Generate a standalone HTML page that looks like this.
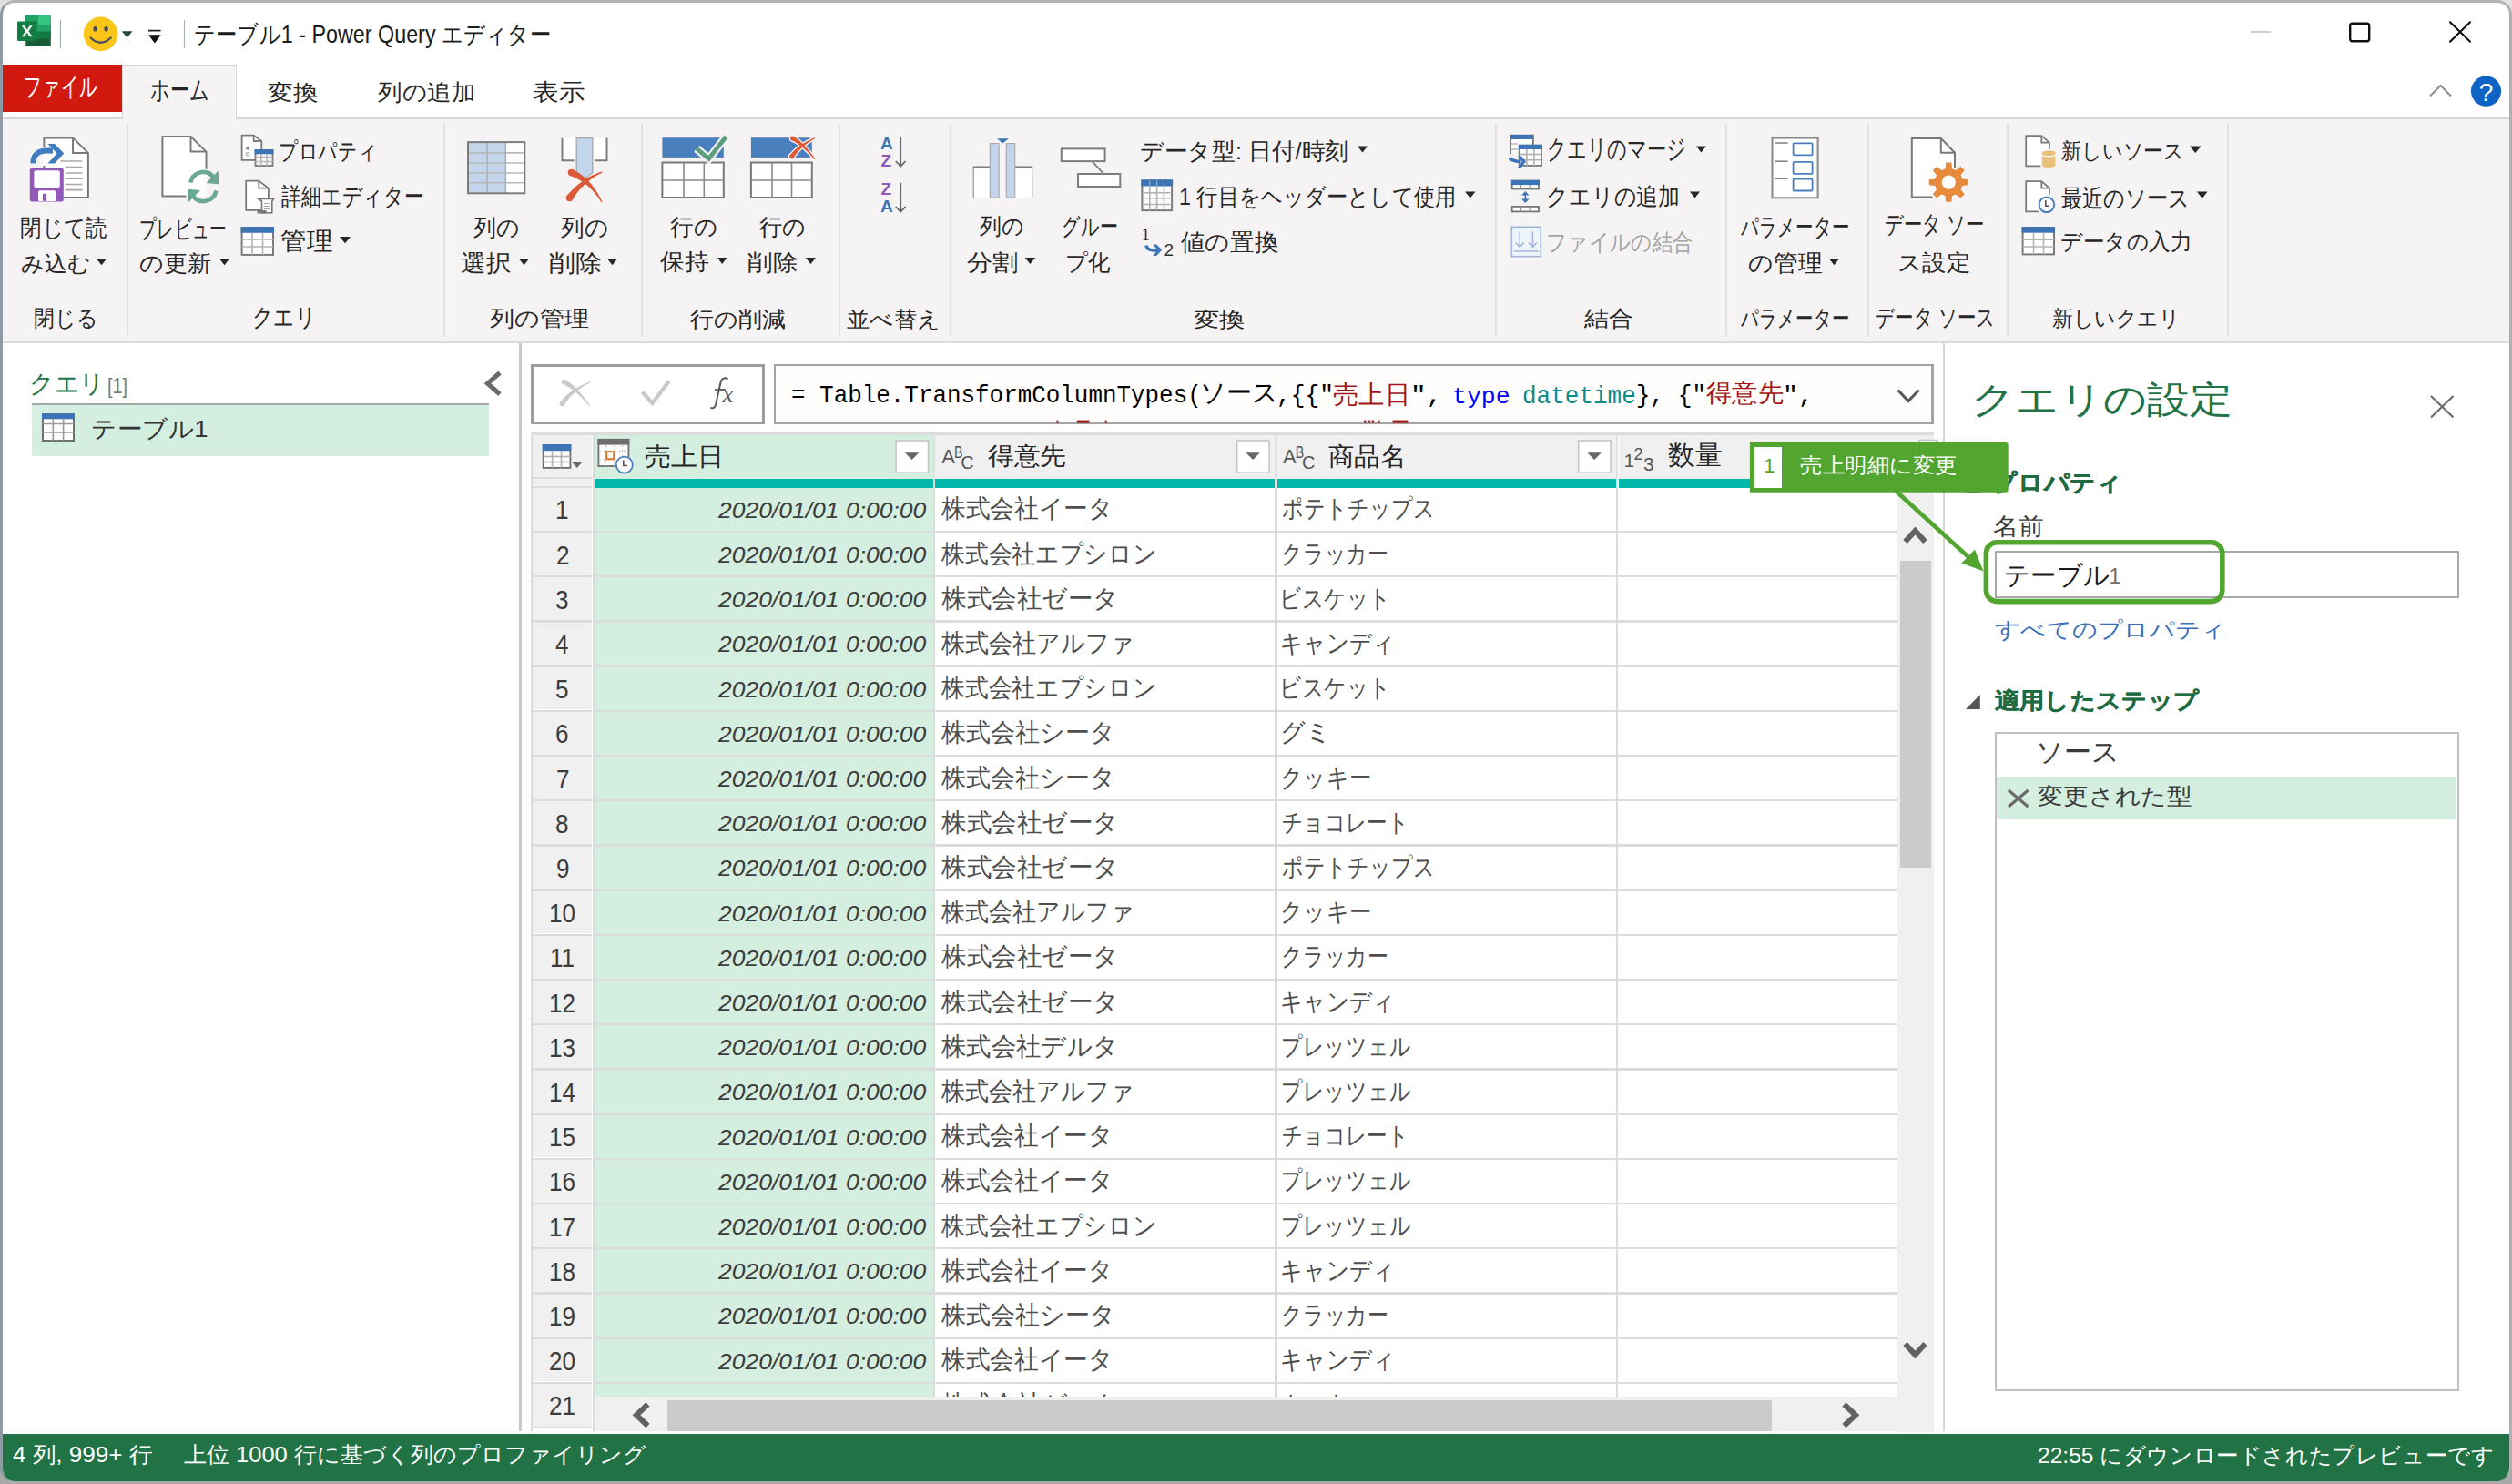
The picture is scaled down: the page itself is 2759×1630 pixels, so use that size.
<!DOCTYPE html>
<html lang="ja"><head><meta charset="utf-8"><title>Power Query</title>
<style>
html,body{margin:0;padding:0;}
body{width:2759px;height:1630px;overflow:hidden;background:linear-gradient(#e2e2e2,#a9a9a9 8%,#a9a9a9);position:relative;font-family:'Liberation Sans',sans-serif;}
#win{position:absolute;left:0;top:0;width:2759px;height:1627px;border-radius:16px;overflow:hidden;background:#ffffff;}
#frame{position:absolute;left:0;top:0;width:2759px;height:1627px;border-radius:16px;box-sizing:border-box;border-top:3px solid #b3b3b3;border-left:3px solid #8e9aa4;border-right:3.5px solid #b0b0b0;pointer-events:none;}
</style></head><body>
<div id="win">
<div style="position:absolute;left:0px;top:70.5px;width:134.00px;height:52.50px;background:#d1190f;"></div><div style="position:absolute;left:0px;top:129.3px;width:2759.00px;height:2.00px;background:#d8d8d8;"></div><div style="position:absolute;left:134px;top:71px;width:126.00px;height:60.30px;background:#f6f3f4;box-sizing:border-box;border:1.5px solid #d8d8d8;border-bottom:none;"></div><div style="position:absolute;left:0px;top:131.3px;width:2759.00px;height:243.70px;background:#f6f3f4;"></div><div style="position:absolute;left:0px;top:375px;width:2759.00px;height:2.30px;background:#dddbdb;"></div><div style="position:absolute;left:138.5px;top:136px;width:2.00px;height:234.00px;background:#e4e1e2;"></div><div style="position:absolute;left:487px;top:136px;width:2.00px;height:234.00px;background:#e4e1e2;"></div><div style="position:absolute;left:704px;top:136px;width:2.00px;height:234.00px;background:#e4e1e2;"></div><div style="position:absolute;left:921px;top:136px;width:2.00px;height:234.00px;background:#e4e1e2;"></div><div style="position:absolute;left:1043px;top:136px;width:2.00px;height:234.00px;background:#e4e1e2;"></div><div style="position:absolute;left:1642px;top:136px;width:2.00px;height:234.00px;background:#e4e1e2;"></div><div style="position:absolute;left:1895px;top:136px;width:2.00px;height:234.00px;background:#e4e1e2;"></div><div style="position:absolute;left:2051px;top:136px;width:2.00px;height:234.00px;background:#e4e1e2;"></div><div style="position:absolute;left:2204px;top:136px;width:2.00px;height:234.00px;background:#e4e1e2;"></div><div style="position:absolute;left:2446px;top:136px;width:2.00px;height:234.00px;background:#e4e1e2;"></div><div style="position:absolute;left:570px;top:377.3px;width:2.80px;height:1195.20px;background:#c9c9c9;"></div><div style="position:absolute;left:35px;top:442.5px;width:502.00px;height:2.70px;background:#a6a6a6;"></div><div style="position:absolute;left:35px;top:445.2px;width:502.00px;height:55.80px;background:#d4eee0;"></div><div style="position:absolute;left:583px;top:400.4px;width:256.50px;height:65.20px;box-sizing:border-box;border:3px solid #9d9d9d;background:#ffffff;"></div><div style="position:absolute;left:850px;top:400.4px;width:1274.20px;height:65.20px;box-sizing:border-box;border:2.6px solid #a3a3a3;background:#fffefd;border-right-width:3.4px;"></div><div style="position:absolute;left:583px;top:475.3px;width:1541.20px;height:2.70px;background:#dcdcdc;"></div><div style="position:absolute;left:583px;top:475.3px;width:2.40px;height:1097.20px;background:#dcdcdc;"></div><div style="position:absolute;left:585.4px;top:478px;width:65.10px;height:45.80px;background:#f0f0f0;"></div><div style="position:absolute;left:585.4px;top:523.8px;width:65.10px;height:2.40px;background:#dcdcdc;"></div><div style="position:absolute;left:585.4px;top:526.2px;width:65.10px;height:7.50px;background:#f0f0f0;"></div><div style="position:absolute;left:585.4px;top:533.7px;width:65.10px;height:2.30px;background:#dcdcdc;"></div><div style="position:absolute;left:650.5px;top:478px;width:2.40px;height:1094.50px;background:#dcdcdc;"></div><div style="position:absolute;left:652.9px;top:478px;width:372.00px;height:48.40px;background:#d4eee0;"></div><div style="position:absolute;left:1024.9px;top:478px;width:2.50px;height:58.00px;background:#e2e2e2;"></div><div style="position:absolute;left:1027.4px;top:478px;width:372.30px;height:48.40px;background:#f0f0f0;"></div><div style="position:absolute;left:1399.7px;top:478px;width:2.90px;height:58.00px;background:#e2e2e2;"></div><div style="position:absolute;left:1402.6px;top:478px;width:372.10px;height:48.40px;background:#f0f0f0;"></div><div style="position:absolute;left:1774.7px;top:478px;width:2.80px;height:58.00px;background:#e2e2e2;"></div><div style="position:absolute;left:1777.5px;top:478px;width:346.70px;height:48.40px;background:#f0f0f0;"></div><div style="position:absolute;left:652.9px;top:526.4px;width:372.00px;height:9.40px;background:#01b8aa;"></div><div style="position:absolute;left:1027.4px;top:526.4px;width:372.30px;height:9.40px;background:#01b8aa;"></div><div style="position:absolute;left:1402.6px;top:526.4px;width:372.10px;height:9.40px;background:#01b8aa;"></div><div style="position:absolute;left:1777.5px;top:526.4px;width:306.80px;height:9.40px;background:#01b8aa;"></div><div style="position:absolute;left:652.9px;top:536px;width:372.00px;height:998.20px;background:#d4eee0;"></div><div style="position:absolute;left:1027.4px;top:536px;width:1056.90px;height:998.20px;background:#ffffff;"></div><div style="position:absolute;left:1024.9px;top:536px;width:2.50px;height:998.20px;background:#dcdcdc;"></div><div style="position:absolute;left:1399.7px;top:536px;width:2.90px;height:998.20px;background:#dcdcdc;"></div><div style="position:absolute;left:1774.7px;top:536px;width:2.80px;height:998.20px;background:#dcdcdc;"></div><div style="position:absolute;left:585.4px;top:536.0px;width:65.10px;height:46.70px;background:#f0f0f0;"></div><div style="position:absolute;left:585.4px;top:582.7px;width:65.10px;height:2.50px;background:#dcdcdc;"></div><div style="position:absolute;left:652.9px;top:582.7px;width:1431.40px;height:2.50px;background:#dcdcdc;"></div><div style="position:absolute;left:585.4px;top:585.2px;width:65.10px;height:46.70px;background:#f0f0f0;"></div><div style="position:absolute;left:585.4px;top:631.9000000000001px;width:65.10px;height:2.50px;background:#dcdcdc;"></div><div style="position:absolute;left:652.9px;top:631.9000000000001px;width:1431.40px;height:2.50px;background:#dcdcdc;"></div><div style="position:absolute;left:585.4px;top:634.4px;width:65.10px;height:46.70px;background:#f0f0f0;"></div><div style="position:absolute;left:585.4px;top:681.1px;width:65.10px;height:2.50px;background:#dcdcdc;"></div><div style="position:absolute;left:652.9px;top:681.1px;width:1431.40px;height:2.50px;background:#dcdcdc;"></div><div style="position:absolute;left:585.4px;top:683.6px;width:65.10px;height:46.70px;background:#f0f0f0;"></div><div style="position:absolute;left:585.4px;top:730.3000000000001px;width:65.10px;height:2.50px;background:#dcdcdc;"></div><div style="position:absolute;left:652.9px;top:730.3000000000001px;width:1431.40px;height:2.50px;background:#dcdcdc;"></div><div style="position:absolute;left:585.4px;top:732.8px;width:65.10px;height:46.70px;background:#f0f0f0;"></div><div style="position:absolute;left:585.4px;top:779.5px;width:65.10px;height:2.50px;background:#dcdcdc;"></div><div style="position:absolute;left:652.9px;top:779.5px;width:1431.40px;height:2.50px;background:#dcdcdc;"></div><div style="position:absolute;left:585.4px;top:782.0px;width:65.10px;height:46.70px;background:#f0f0f0;"></div><div style="position:absolute;left:585.4px;top:828.7px;width:65.10px;height:2.50px;background:#dcdcdc;"></div><div style="position:absolute;left:652.9px;top:828.7px;width:1431.40px;height:2.50px;background:#dcdcdc;"></div><div style="position:absolute;left:585.4px;top:831.2px;width:65.10px;height:46.70px;background:#f0f0f0;"></div><div style="position:absolute;left:585.4px;top:877.9000000000001px;width:65.10px;height:2.50px;background:#dcdcdc;"></div><div style="position:absolute;left:652.9px;top:877.9000000000001px;width:1431.40px;height:2.50px;background:#dcdcdc;"></div><div style="position:absolute;left:585.4px;top:880.4000000000001px;width:65.10px;height:46.70px;background:#f0f0f0;"></div><div style="position:absolute;left:585.4px;top:927.1000000000001px;width:65.10px;height:2.50px;background:#dcdcdc;"></div><div style="position:absolute;left:652.9px;top:927.1000000000001px;width:1431.40px;height:2.50px;background:#dcdcdc;"></div><div style="position:absolute;left:585.4px;top:929.6px;width:65.10px;height:46.70px;background:#f0f0f0;"></div><div style="position:absolute;left:585.4px;top:976.3000000000001px;width:65.10px;height:2.50px;background:#dcdcdc;"></div><div style="position:absolute;left:652.9px;top:976.3000000000001px;width:1431.40px;height:2.50px;background:#dcdcdc;"></div><div style="position:absolute;left:585.4px;top:978.8px;width:65.10px;height:46.70px;background:#f0f0f0;"></div><div style="position:absolute;left:585.4px;top:1025.5px;width:65.10px;height:2.50px;background:#dcdcdc;"></div><div style="position:absolute;left:652.9px;top:1025.5px;width:1431.40px;height:2.50px;background:#dcdcdc;"></div><div style="position:absolute;left:585.4px;top:1028.0px;width:65.10px;height:46.70px;background:#f0f0f0;"></div><div style="position:absolute;left:585.4px;top:1074.7px;width:65.10px;height:2.50px;background:#dcdcdc;"></div><div style="position:absolute;left:652.9px;top:1074.7px;width:1431.40px;height:2.50px;background:#dcdcdc;"></div><div style="position:absolute;left:585.4px;top:1077.2px;width:65.10px;height:46.70px;background:#f0f0f0;"></div><div style="position:absolute;left:585.4px;top:1123.9px;width:65.10px;height:2.50px;background:#dcdcdc;"></div><div style="position:absolute;left:652.9px;top:1123.9px;width:1431.40px;height:2.50px;background:#dcdcdc;"></div><div style="position:absolute;left:585.4px;top:1126.4px;width:65.10px;height:46.70px;background:#f0f0f0;"></div><div style="position:absolute;left:585.4px;top:1173.1000000000001px;width:65.10px;height:2.50px;background:#dcdcdc;"></div><div style="position:absolute;left:652.9px;top:1173.1000000000001px;width:1431.40px;height:2.50px;background:#dcdcdc;"></div><div style="position:absolute;left:585.4px;top:1175.6px;width:65.10px;height:46.70px;background:#f0f0f0;"></div><div style="position:absolute;left:585.4px;top:1222.3px;width:65.10px;height:2.50px;background:#dcdcdc;"></div><div style="position:absolute;left:652.9px;top:1222.3px;width:1431.40px;height:2.50px;background:#dcdcdc;"></div><div style="position:absolute;left:585.4px;top:1224.8000000000002px;width:65.10px;height:46.70px;background:#f0f0f0;"></div><div style="position:absolute;left:585.4px;top:1271.5000000000002px;width:65.10px;height:2.50px;background:#dcdcdc;"></div><div style="position:absolute;left:652.9px;top:1271.5000000000002px;width:1431.40px;height:2.50px;background:#dcdcdc;"></div><div style="position:absolute;left:585.4px;top:1274.0px;width:65.10px;height:46.70px;background:#f0f0f0;"></div><div style="position:absolute;left:585.4px;top:1320.7px;width:65.10px;height:2.50px;background:#dcdcdc;"></div><div style="position:absolute;left:652.9px;top:1320.7px;width:1431.40px;height:2.50px;background:#dcdcdc;"></div><div style="position:absolute;left:585.4px;top:1323.2px;width:65.10px;height:46.70px;background:#f0f0f0;"></div><div style="position:absolute;left:585.4px;top:1369.9px;width:65.10px;height:2.50px;background:#dcdcdc;"></div><div style="position:absolute;left:652.9px;top:1369.9px;width:1431.40px;height:2.50px;background:#dcdcdc;"></div><div style="position:absolute;left:585.4px;top:1372.4px;width:65.10px;height:46.70px;background:#f0f0f0;"></div><div style="position:absolute;left:585.4px;top:1419.1000000000001px;width:65.10px;height:2.50px;background:#dcdcdc;"></div><div style="position:absolute;left:652.9px;top:1419.1000000000001px;width:1431.40px;height:2.50px;background:#dcdcdc;"></div><div style="position:absolute;left:585.4px;top:1421.6px;width:65.10px;height:46.70px;background:#f0f0f0;"></div><div style="position:absolute;left:585.4px;top:1468.3px;width:65.10px;height:2.50px;background:#dcdcdc;"></div><div style="position:absolute;left:652.9px;top:1468.3px;width:1431.40px;height:2.50px;background:#dcdcdc;"></div><div style="position:absolute;left:585.4px;top:1470.8000000000002px;width:65.10px;height:46.70px;background:#f0f0f0;"></div><div style="position:absolute;left:585.4px;top:1517.5000000000002px;width:65.10px;height:2.50px;background:#dcdcdc;"></div><div style="position:absolute;left:652.9px;top:1517.5000000000002px;width:1431.40px;height:2.50px;background:#dcdcdc;"></div><div style="position:absolute;left:585.4px;top:1520.0px;width:65.10px;height:46.70px;background:#f0f0f0;"></div><div style="position:absolute;left:585.4px;top:1566.7px;width:65.10px;height:2.50px;background:#dcdcdc;"></div><div style="position:absolute;left:2084.3px;top:541px;width:39.90px;height:1031.50px;background:#f0f0f0;"></div><div style="position:absolute;left:2087.3px;top:615.9px;width:33.70px;height:337.10px;background:#cbcbcb;"></div><div style="position:absolute;left:652.9px;top:1534.2px;width:1431.40px;height:38.30px;background:#f0f0f0;"></div><div style="position:absolute;left:732.6px;top:1538px;width:1213.40px;height:33.80px;background:#cbcbcb;"></div><div style="position:absolute;left:2134px;top:377.3px;width:2.00px;height:1195.20px;background:#d4d4d4;"></div><div style="position:absolute;left:2190.5px;top:604.8px;width:510.20px;height:52.20px;box-sizing:border-box;border:2.6px solid #a8a8a8;background:#ffffff;"></div><div style="position:absolute;left:2190.5px;top:804px;width:510.20px;height:723.50px;box-sizing:border-box;border:2.6px solid #c0c0c0;background:#ffffff;"></div><div style="position:absolute;left:2193.1px;top:853px;width:505.00px;height:46.70px;background:#d4eee0;"></div><div style="position:absolute;left:0px;top:1575px;width:2759.00px;height:55.00px;background:#217346;"></div>
<div style="position:absolute;left:0;top:0;width:2759px;height:1534.2px;overflow:hidden">
<div style="position:absolute;left:0;top:0;width:2084.3px;height:1534.2px;overflow:hidden"><div style="position:absolute;left:789.30px;top:548.75px;font-family:'Liberation Sans', sans-serif;font-size:24.028px;line-height:1;white-space:pre;font-style:italic;color:#3c3c3c;transform:scaleX(1.1029);transform-origin:0 0;">2020/01/01 0:00:00</div><div style="position:absolute;left:1034.40px;top:545.40px;font-family:'Liberation Sans', sans-serif;font-size:27.623px;line-height:1;white-space:pre;color:#4e4e4e;transform:scaleX(0.9536);transform-origin:0 0;">株式会社イータ</div><div style="position:absolute;left:1408.17px;top:545.40px;font-family:'Liberation Sans', sans-serif;font-size:27.623px;line-height:1;white-space:pre;color:#4e4e4e;transform:scaleX(0.8274);transform-origin:0 0;">ポテトチップス</div><div style="position:absolute;left:789.30px;top:597.95px;font-family:'Liberation Sans', sans-serif;font-size:24.028px;line-height:1;white-space:pre;font-style:italic;color:#3c3c3c;transform:scaleX(1.1029);transform-origin:0 0;">2020/01/01 0:00:00</div><div style="position:absolute;left:1034.40px;top:594.60px;font-family:'Liberation Sans', sans-serif;font-size:27.623px;line-height:1;white-space:pre;color:#4e4e4e;transform:scaleX(0.9197);transform-origin:0 0;">株式会社エプシロン</div><div style="position:absolute;left:1406.54px;top:594.60px;font-family:'Liberation Sans', sans-serif;font-size:27.623px;line-height:1;white-space:pre;color:#4e4e4e;transform:scaleX(0.8201);transform-origin:0 0;">クラッカー</div><div style="position:absolute;left:789.30px;top:647.15px;font-family:'Liberation Sans', sans-serif;font-size:24.028px;line-height:1;white-space:pre;font-style:italic;color:#3c3c3c;transform:scaleX(1.1029);transform-origin:0 0;">2020/01/01 0:00:00</div><div style="position:absolute;left:1034.40px;top:643.80px;font-family:'Liberation Sans', sans-serif;font-size:27.623px;line-height:1;white-space:pre;color:#4e4e4e;transform:scaleX(0.9823);transform-origin:0 0;">株式会社ゼータ</div><div style="position:absolute;left:1404.77px;top:643.80px;font-family:'Liberation Sans', sans-serif;font-size:27.623px;line-height:1;white-space:pre;color:#4e4e4e;transform:scaleX(0.8455);transform-origin:0 0;">ビスケット</div><div style="position:absolute;left:789.30px;top:696.35px;font-family:'Liberation Sans', sans-serif;font-size:24.028px;line-height:1;white-space:pre;font-style:italic;color:#3c3c3c;transform:scaleX(1.1029);transform-origin:0 0;">2020/01/01 0:00:00</div><div style="position:absolute;left:1034.40px;top:693.00px;font-family:'Liberation Sans', sans-serif;font-size:27.623px;line-height:1;white-space:pre;color:#4e4e4e;transform:scaleX(0.9304);transform-origin:0 0;">株式会社アルファ</div><div style="position:absolute;left:1406.38px;top:693.00px;font-family:'Liberation Sans', sans-serif;font-size:27.623px;line-height:1;white-space:pre;color:#4e4e4e;transform:scaleX(0.8728);transform-origin:0 0;">キャンディ</div><div style="position:absolute;left:789.30px;top:745.55px;font-family:'Liberation Sans', sans-serif;font-size:24.028px;line-height:1;white-space:pre;font-style:italic;color:#3c3c3c;transform:scaleX(1.1029);transform-origin:0 0;">2020/01/01 0:00:00</div><div style="position:absolute;left:1034.40px;top:742.20px;font-family:'Liberation Sans', sans-serif;font-size:27.623px;line-height:1;white-space:pre;color:#4e4e4e;transform:scaleX(0.9197);transform-origin:0 0;">株式会社エプシロン</div><div style="position:absolute;left:1404.77px;top:742.20px;font-family:'Liberation Sans', sans-serif;font-size:27.623px;line-height:1;white-space:pre;color:#4e4e4e;transform:scaleX(0.8455);transform-origin:0 0;">ビスケット</div><div style="position:absolute;left:789.30px;top:794.75px;font-family:'Liberation Sans', sans-serif;font-size:24.028px;line-height:1;white-space:pre;font-style:italic;color:#3c3c3c;transform:scaleX(1.1029);transform-origin:0 0;">2020/01/01 0:00:00</div><div style="position:absolute;left:1034.40px;top:791.40px;font-family:'Liberation Sans', sans-serif;font-size:27.623px;line-height:1;white-space:pre;color:#4e4e4e;transform:scaleX(0.9646);transform-origin:0 0;">株式会社シータ</div><div style="position:absolute;left:1406.09px;top:791.40px;font-family:'Liberation Sans', sans-serif;font-size:27.623px;line-height:1;white-space:pre;color:#4e4e4e;transform:scaleX(0.9696);transform-origin:0 0;">グミ</div><div style="position:absolute;left:789.30px;top:843.95px;font-family:'Liberation Sans', sans-serif;font-size:24.028px;line-height:1;white-space:pre;font-style:italic;color:#3c3c3c;transform:scaleX(1.1029);transform-origin:0 0;">2020/01/01 0:00:00</div><div style="position:absolute;left:1034.40px;top:840.60px;font-family:'Liberation Sans', sans-serif;font-size:27.623px;line-height:1;white-space:pre;color:#4e4e4e;transform:scaleX(0.9646);transform-origin:0 0;">株式会社シータ</div><div style="position:absolute;left:1406.39px;top:840.60px;font-family:'Liberation Sans', sans-serif;font-size:27.623px;line-height:1;white-space:pre;color:#4e4e4e;transform:scaleX(0.8709);transform-origin:0 0;">クッキー</div><div style="position:absolute;left:789.30px;top:893.15px;font-family:'Liberation Sans', sans-serif;font-size:24.028px;line-height:1;white-space:pre;font-style:italic;color:#3c3c3c;transform:scaleX(1.1029);transform-origin:0 0;">2020/01/01 0:00:00</div><div style="position:absolute;left:1034.40px;top:889.80px;font-family:'Liberation Sans', sans-serif;font-size:27.623px;line-height:1;white-space:pre;color:#4e4e4e;transform:scaleX(0.9823);transform-origin:0 0;">株式会社ゼータ</div><div style="position:absolute;left:1408.20px;top:889.80px;font-family:'Liberation Sans', sans-serif;font-size:27.623px;line-height:1;white-space:pre;color:#4e4e4e;transform:scaleX(0.8049);transform-origin:0 0;">チョコレート</div><div style="position:absolute;left:789.30px;top:942.35px;font-family:'Liberation Sans', sans-serif;font-size:24.028px;line-height:1;white-space:pre;font-style:italic;color:#3c3c3c;transform:scaleX(1.1029);transform-origin:0 0;">2020/01/01 0:00:00</div><div style="position:absolute;left:1034.40px;top:939.00px;font-family:'Liberation Sans', sans-serif;font-size:27.623px;line-height:1;white-space:pre;color:#4e4e4e;transform:scaleX(0.9823);transform-origin:0 0;">株式会社ゼータ</div><div style="position:absolute;left:1408.17px;top:939.00px;font-family:'Liberation Sans', sans-serif;font-size:27.623px;line-height:1;white-space:pre;color:#4e4e4e;transform:scaleX(0.8274);transform-origin:0 0;">ポテトチップス</div><div style="position:absolute;left:789.30px;top:991.55px;font-family:'Liberation Sans', sans-serif;font-size:24.028px;line-height:1;white-space:pre;font-style:italic;color:#3c3c3c;transform:scaleX(1.1029);transform-origin:0 0;">2020/01/01 0:00:00</div><div style="position:absolute;left:1034.40px;top:988.20px;font-family:'Liberation Sans', sans-serif;font-size:27.623px;line-height:1;white-space:pre;color:#4e4e4e;transform:scaleX(0.9304);transform-origin:0 0;">株式会社アルファ</div><div style="position:absolute;left:1406.39px;top:988.20px;font-family:'Liberation Sans', sans-serif;font-size:27.623px;line-height:1;white-space:pre;color:#4e4e4e;transform:scaleX(0.8709);transform-origin:0 0;">クッキー</div><div style="position:absolute;left:789.30px;top:1040.75px;font-family:'Liberation Sans', sans-serif;font-size:24.028px;line-height:1;white-space:pre;font-style:italic;color:#3c3c3c;transform:scaleX(1.1029);transform-origin:0 0;">2020/01/01 0:00:00</div><div style="position:absolute;left:1034.40px;top:1037.40px;font-family:'Liberation Sans', sans-serif;font-size:27.623px;line-height:1;white-space:pre;color:#4e4e4e;transform:scaleX(0.9823);transform-origin:0 0;">株式会社ゼータ</div><div style="position:absolute;left:1406.54px;top:1037.40px;font-family:'Liberation Sans', sans-serif;font-size:27.623px;line-height:1;white-space:pre;color:#4e4e4e;transform:scaleX(0.8201);transform-origin:0 0;">クラッカー</div><div style="position:absolute;left:789.30px;top:1089.95px;font-family:'Liberation Sans', sans-serif;font-size:24.028px;line-height:1;white-space:pre;font-style:italic;color:#3c3c3c;transform:scaleX(1.1029);transform-origin:0 0;">2020/01/01 0:00:00</div><div style="position:absolute;left:1034.40px;top:1086.60px;font-family:'Liberation Sans', sans-serif;font-size:27.623px;line-height:1;white-space:pre;color:#4e4e4e;transform:scaleX(0.9823);transform-origin:0 0;">株式会社ゼータ</div><div style="position:absolute;left:1406.38px;top:1086.60px;font-family:'Liberation Sans', sans-serif;font-size:27.623px;line-height:1;white-space:pre;color:#4e4e4e;transform:scaleX(0.8728);transform-origin:0 0;">キャンディ</div><div style="position:absolute;left:789.30px;top:1139.15px;font-family:'Liberation Sans', sans-serif;font-size:24.028px;line-height:1;white-space:pre;font-style:italic;color:#3c3c3c;transform:scaleX(1.1029);transform-origin:0 0;">2020/01/01 0:00:00</div><div style="position:absolute;left:1034.40px;top:1135.80px;font-family:'Liberation Sans', sans-serif;font-size:27.623px;line-height:1;white-space:pre;color:#4e4e4e;transform:scaleX(0.9772);transform-origin:0 0;">株式会社デルタ</div><div style="position:absolute;left:1407.36px;top:1135.80px;font-family:'Liberation Sans', sans-serif;font-size:27.623px;line-height:1;white-space:pre;color:#4e4e4e;transform:scaleX(0.8187);transform-origin:0 0;">プレッツェル</div><div style="position:absolute;left:789.30px;top:1188.35px;font-family:'Liberation Sans', sans-serif;font-size:24.028px;line-height:1;white-space:pre;font-style:italic;color:#3c3c3c;transform:scaleX(1.1029);transform-origin:0 0;">2020/01/01 0:00:00</div><div style="position:absolute;left:1034.40px;top:1185.00px;font-family:'Liberation Sans', sans-serif;font-size:27.623px;line-height:1;white-space:pre;color:#4e4e4e;transform:scaleX(0.9304);transform-origin:0 0;">株式会社アルファ</div><div style="position:absolute;left:1407.36px;top:1185.00px;font-family:'Liberation Sans', sans-serif;font-size:27.623px;line-height:1;white-space:pre;color:#4e4e4e;transform:scaleX(0.8187);transform-origin:0 0;">プレッツェル</div><div style="position:absolute;left:789.30px;top:1237.55px;font-family:'Liberation Sans', sans-serif;font-size:24.028px;line-height:1;white-space:pre;font-style:italic;color:#3c3c3c;transform:scaleX(1.1029);transform-origin:0 0;">2020/01/01 0:00:00</div><div style="position:absolute;left:1034.40px;top:1234.20px;font-family:'Liberation Sans', sans-serif;font-size:27.623px;line-height:1;white-space:pre;color:#4e4e4e;transform:scaleX(0.9536);transform-origin:0 0;">株式会社イータ</div><div style="position:absolute;left:1408.20px;top:1234.20px;font-family:'Liberation Sans', sans-serif;font-size:27.623px;line-height:1;white-space:pre;color:#4e4e4e;transform:scaleX(0.8049);transform-origin:0 0;">チョコレート</div><div style="position:absolute;left:789.30px;top:1286.75px;font-family:'Liberation Sans', sans-serif;font-size:24.028px;line-height:1;white-space:pre;font-style:italic;color:#3c3c3c;transform:scaleX(1.1029);transform-origin:0 0;">2020/01/01 0:00:00</div><div style="position:absolute;left:1034.40px;top:1283.40px;font-family:'Liberation Sans', sans-serif;font-size:27.623px;line-height:1;white-space:pre;color:#4e4e4e;transform:scaleX(0.9536);transform-origin:0 0;">株式会社イータ</div><div style="position:absolute;left:1407.36px;top:1283.40px;font-family:'Liberation Sans', sans-serif;font-size:27.623px;line-height:1;white-space:pre;color:#4e4e4e;transform:scaleX(0.8187);transform-origin:0 0;">プレッツェル</div><div style="position:absolute;left:789.30px;top:1335.95px;font-family:'Liberation Sans', sans-serif;font-size:24.028px;line-height:1;white-space:pre;font-style:italic;color:#3c3c3c;transform:scaleX(1.1029);transform-origin:0 0;">2020/01/01 0:00:00</div><div style="position:absolute;left:1034.40px;top:1332.60px;font-family:'Liberation Sans', sans-serif;font-size:27.623px;line-height:1;white-space:pre;color:#4e4e4e;transform:scaleX(0.9197);transform-origin:0 0;">株式会社エプシロン</div><div style="position:absolute;left:1407.36px;top:1332.60px;font-family:'Liberation Sans', sans-serif;font-size:27.623px;line-height:1;white-space:pre;color:#4e4e4e;transform:scaleX(0.8187);transform-origin:0 0;">プレッツェル</div><div style="position:absolute;left:789.30px;top:1385.15px;font-family:'Liberation Sans', sans-serif;font-size:24.028px;line-height:1;white-space:pre;font-style:italic;color:#3c3c3c;transform:scaleX(1.1029);transform-origin:0 0;">2020/01/01 0:00:00</div><div style="position:absolute;left:1034.40px;top:1381.80px;font-family:'Liberation Sans', sans-serif;font-size:27.623px;line-height:1;white-space:pre;color:#4e4e4e;transform:scaleX(0.9536);transform-origin:0 0;">株式会社イータ</div><div style="position:absolute;left:1406.38px;top:1381.80px;font-family:'Liberation Sans', sans-serif;font-size:27.623px;line-height:1;white-space:pre;color:#4e4e4e;transform:scaleX(0.8728);transform-origin:0 0;">キャンディ</div><div style="position:absolute;left:789.30px;top:1434.35px;font-family:'Liberation Sans', sans-serif;font-size:24.028px;line-height:1;white-space:pre;font-style:italic;color:#3c3c3c;transform:scaleX(1.1029);transform-origin:0 0;">2020/01/01 0:00:00</div><div style="position:absolute;left:1034.40px;top:1431.00px;font-family:'Liberation Sans', sans-serif;font-size:27.623px;line-height:1;white-space:pre;color:#4e4e4e;transform:scaleX(0.9646);transform-origin:0 0;">株式会社シータ</div><div style="position:absolute;left:1406.54px;top:1431.00px;font-family:'Liberation Sans', sans-serif;font-size:27.623px;line-height:1;white-space:pre;color:#4e4e4e;transform:scaleX(0.8201);transform-origin:0 0;">クラッカー</div><div style="position:absolute;left:789.30px;top:1483.55px;font-family:'Liberation Sans', sans-serif;font-size:24.028px;line-height:1;white-space:pre;font-style:italic;color:#3c3c3c;transform:scaleX(1.1029);transform-origin:0 0;">2020/01/01 0:00:00</div><div style="position:absolute;left:1034.40px;top:1480.20px;font-family:'Liberation Sans', sans-serif;font-size:27.623px;line-height:1;white-space:pre;color:#4e4e4e;transform:scaleX(0.9536);transform-origin:0 0;">株式会社イータ</div><div style="position:absolute;left:1406.38px;top:1480.20px;font-family:'Liberation Sans', sans-serif;font-size:27.623px;line-height:1;white-space:pre;color:#4e4e4e;transform:scaleX(0.8728);transform-origin:0 0;">キャンディ</div><div style="position:absolute;left:789.30px;top:1532.75px;font-family:'Liberation Sans', sans-serif;font-size:24.028px;line-height:1;white-space:pre;font-style:italic;color:#3c3c3c;transform:scaleX(1.1029);transform-origin:0 0;">2020/01/01 0:00:00</div><div style="position:absolute;left:1034.40px;top:1529.40px;font-family:'Liberation Sans', sans-serif;font-size:27.623px;line-height:1;white-space:pre;color:#4e4e4e;transform:scaleX(0.9823);transform-origin:0 0;">株式会社ゼータ</div><div style="position:absolute;left:1406.39px;top:1529.40px;font-family:'Liberation Sans', sans-serif;font-size:27.623px;line-height:1;white-space:pre;color:#4e4e4e;transform:scaleX(0.8709);transform-origin:0 0;">クッキー</div></div>
</div>
<div style="position:absolute;left:0;top:0;width:2759px;height:1572.5px;overflow:hidden"><div style="position:absolute;left:610.40px;top:545.40px;font-family:'Liberation Sans', sans-serif;font-size:30.063px;line-height:1;white-space:pre;color:#3b3b3b;transform:scaleX(0.8700);transform-origin:0 0;">1</div><div style="position:absolute;left:610.84px;top:594.60px;font-family:'Liberation Sans', sans-serif;font-size:30.063px;line-height:1;white-space:pre;color:#3b3b3b;transform:scaleX(0.8700);transform-origin:0 0;">2</div><div style="position:absolute;left:610.40px;top:643.80px;font-family:'Liberation Sans', sans-serif;font-size:30.063px;line-height:1;white-space:pre;color:#3b3b3b;transform:scaleX(0.8700);transform-origin:0 0;">3</div><div style="position:absolute;left:610.40px;top:693.00px;font-family:'Liberation Sans', sans-serif;font-size:30.063px;line-height:1;white-space:pre;color:#3b3b3b;transform:scaleX(0.8700);transform-origin:0 0;">4</div><div style="position:absolute;left:610.40px;top:742.20px;font-family:'Liberation Sans', sans-serif;font-size:30.063px;line-height:1;white-space:pre;color:#3b3b3b;transform:scaleX(0.8700);transform-origin:0 0;">5</div><div style="position:absolute;left:610.40px;top:791.40px;font-family:'Liberation Sans', sans-serif;font-size:30.063px;line-height:1;white-space:pre;color:#3b3b3b;transform:scaleX(0.8700);transform-origin:0 0;">6</div><div style="position:absolute;left:610.84px;top:840.60px;font-family:'Liberation Sans', sans-serif;font-size:30.063px;line-height:1;white-space:pre;color:#3b3b3b;transform:scaleX(0.8700);transform-origin:0 0;">7</div><div style="position:absolute;left:610.40px;top:889.80px;font-family:'Liberation Sans', sans-serif;font-size:30.063px;line-height:1;white-space:pre;color:#3b3b3b;transform:scaleX(0.8700);transform-origin:0 0;">8</div><div style="position:absolute;left:610.84px;top:939.00px;font-family:'Liberation Sans', sans-serif;font-size:30.063px;line-height:1;white-space:pre;color:#3b3b3b;transform:scaleX(0.8700);transform-origin:0 0;">9</div><div style="position:absolute;left:603.01px;top:988.20px;font-family:'Liberation Sans', sans-serif;font-size:30.063px;line-height:1;white-space:pre;color:#3b3b3b;transform:scaleX(0.8700);transform-origin:0 0;">10</div><div style="position:absolute;left:603.88px;top:1037.40px;font-family:'Liberation Sans', sans-serif;font-size:30.063px;line-height:1;white-space:pre;color:#3b3b3b;transform:scaleX(0.8700);transform-origin:0 0;">11</div><div style="position:absolute;left:603.01px;top:1086.60px;font-family:'Liberation Sans', sans-serif;font-size:30.063px;line-height:1;white-space:pre;color:#3b3b3b;transform:scaleX(0.8700);transform-origin:0 0;">12</div><div style="position:absolute;left:603.01px;top:1135.80px;font-family:'Liberation Sans', sans-serif;font-size:30.063px;line-height:1;white-space:pre;color:#3b3b3b;transform:scaleX(0.8700);transform-origin:0 0;">13</div><div style="position:absolute;left:602.57px;top:1185.00px;font-family:'Liberation Sans', sans-serif;font-size:30.063px;line-height:1;white-space:pre;color:#3b3b3b;transform:scaleX(0.8700);transform-origin:0 0;">14</div><div style="position:absolute;left:603.01px;top:1234.20px;font-family:'Liberation Sans', sans-serif;font-size:30.063px;line-height:1;white-space:pre;color:#3b3b3b;transform:scaleX(0.8700);transform-origin:0 0;">15</div><div style="position:absolute;left:603.01px;top:1283.40px;font-family:'Liberation Sans', sans-serif;font-size:30.063px;line-height:1;white-space:pre;color:#3b3b3b;transform:scaleX(0.8700);transform-origin:0 0;">16</div><div style="position:absolute;left:603.01px;top:1332.60px;font-family:'Liberation Sans', sans-serif;font-size:30.063px;line-height:1;white-space:pre;color:#3b3b3b;transform:scaleX(0.8700);transform-origin:0 0;">17</div><div style="position:absolute;left:603.01px;top:1381.80px;font-family:'Liberation Sans', sans-serif;font-size:30.063px;line-height:1;white-space:pre;color:#3b3b3b;transform:scaleX(0.8700);transform-origin:0 0;">18</div><div style="position:absolute;left:603.01px;top:1431.00px;font-family:'Liberation Sans', sans-serif;font-size:30.063px;line-height:1;white-space:pre;color:#3b3b3b;transform:scaleX(0.8700);transform-origin:0 0;">19</div><div style="position:absolute;left:603.44px;top:1480.20px;font-family:'Liberation Sans', sans-serif;font-size:30.063px;line-height:1;white-space:pre;color:#3b3b3b;transform:scaleX(0.8700);transform-origin:0 0;">20</div><div style="position:absolute;left:603.44px;top:1529.40px;font-family:'Liberation Sans', sans-serif;font-size:30.063px;line-height:1;white-space:pre;color:#3b3b3b;transform:scaleX(0.8700);transform-origin:0 0;">21</div></div>
<svg style="position:absolute;left:0;top:0" width="2759" height="1630" viewBox="0 0 2759 1630"><rect x="28.3" y="17.1" width="27.5" height="34" rx="1.5" fill="#185c37"/><rect x="28.3" y="17.1" width="27.5" height="25.4" fill="#107c41"/><rect x="28.3" y="17.1" width="27.5" height="17.4" fill="#21a366"/><rect x="42" y="17.1" width="13.8" height="10" fill="#33c481"/><rect x="19" y="23.4" width="21.5" height="21.5" rx="1.2" fill="#107c41"/><path d="M23.8 28.2L27 28.2L29.8 32.6L32.6 28.2L35.6 28.2L31.4 34.3L35.8 40.2L32.6 40.2L29.7 35.8L26.9 40.2L23.7 40.2L28.1 34.2Z" fill="#fff"/><line x1="66.5" y1="22" x2="66.5" y2="53" stroke="#9fb0ad" stroke-width="1.2"/><circle cx="110.6" cy="37.4" r="18.8" fill="#fcc51a"/><ellipse cx="104.6" cy="31.8" rx="2.3" ry="2.8" fill="#4b4f5c"/><ellipse cx="116.6" cy="31.8" rx="2.3" ry="2.8" fill="#4b4f5c"/><path d="M99.5 41.5Q110.6 52 121.7 41.5" fill="none" stroke="#4b4f5c" stroke-width="2.2" stroke-linecap="round"/><path d="M133.7 34.2L145.6 34.2L139.64999999999998 41.2Z" fill="#1d4a38"/><line x1="163" y1="33.6" x2="176.6" y2="33.6" stroke="#222" stroke-width="1.6"/><path d="M163 38.2L176.8 38.2L169.9 47.4Z" fill="#111"/><line x1="202.5" y1="22" x2="202.5" y2="53" stroke="#a7b5b3" stroke-width="1.2"/><line x1="2472" y1="35" x2="2494" y2="35" stroke="#c9c9c9" stroke-width="1.8"/><rect x="2581.2" y="25.7" width="21" height="19.6" rx="2.5" fill="none" stroke="#111" stroke-width="2.4"/><path d="M2691 24.3L2713 45.7M2713 24.3L2691 45.7" stroke="#111" stroke-width="2.2" stroke-linecap="round"/><path d="M2669 105.5L2680.5 94L2692 105.5" fill="none" stroke="#8c8c8c" stroke-width="2"/><circle cx="2730.5" cy="100.2" r="16.6" fill="#0f63c4"/><text x="2730.5" y="110.5" font-family="Liberation Sans" font-size="28" fill="#fff" text-anchor="middle">?</text><path d="M48.4 151.4H80L96.9 168V216.9H48.4Z" fill="#fff"/><path d="M48.4 151.4H80L96.9 168V216.9H48.4Z" fill="none" stroke="#7a7a7a" stroke-width="2" stroke-linejoin="round"/><path d="M80 151.4V168H96.9" fill="none" stroke="#7a7a7a" stroke-width="2" stroke-linejoin="round"/><rect x="46.5" y="163" width="4" height="19" fill="#fff"/><line x1="71.5" y1="183.5" x2="90.5" y2="183.5" stroke="#a8a8a8" stroke-width="1.6"/><line x1="71.5" y1="190" x2="90.5" y2="190" stroke="#a8a8a8" stroke-width="1.6"/><line x1="71.5" y1="196.2" x2="90.5" y2="196.2" stroke="#a8a8a8" stroke-width="1.6"/><line x1="71.5" y1="202.5" x2="90.5" y2="202.5" stroke="#a8a8a8" stroke-width="1.6"/><line x1="71.5" y1="208.6" x2="90.5" y2="208.6" stroke="#a8a8a8" stroke-width="1.6"/><line x1="66.5" y1="177" x2="90.5" y2="177" stroke="#a8a8a8" stroke-width="1.6"/><path d="M36.3 179.4C36.5 169 43 165.6 51 165.6H58" fill="none" stroke="#f8f8f8" stroke-width="8"/><path d="M36.3 179.4C36.5 169 43 165.6 51 165.6H58" fill="none" stroke="#3f7cc0" stroke-width="6"/><path d="M52.5 157.9H60L70.3 168.4L60 179.4H52.5L62.5 168.4Z" fill="#3f7cc0"/><rect x="32.8" y="184.4" width="37" height="37" rx="2.5" fill="#9158b8"/><rect x="37.4" y="187.2" width="28.4" height="18.8" rx="2" fill="#fff"/><rect x="42" y="209.3" width="19" height="11.6" rx="1.5" fill="#fff"/><rect x="47" y="212.8" width="4" height="8" fill="#9158b8"/><path d="M106 284.2L117 284.2L111.5 291.2Z" fill="#262626"/><path d="M178.4 150H209.5L226.5 166.6V215.5H178.4Z" fill="#fff"/><path d="M226.5 185.8V166.6L209.5 150H178.4V215.5H204.5" fill="none" stroke="#7a7a7a" stroke-width="2" stroke-linejoin="round"/><path d="M209.5 150V166.6H226.5" fill="none" stroke="#7a7a7a" stroke-width="2" stroke-linejoin="round"/><path d="M209.2 200.5A14.3 14.3 0 0 1 234.5 194.5" fill="none" stroke="#6aa892" stroke-width="4.6"/><path d="M239.8 187.5L240.2 202.2L226.5 201Z" fill="#6aa892"/><path d="M237.4 209.5A14.3 14.3 0 0 1 212.1 215.5" fill="none" stroke="#6aa892" stroke-width="4.6"/><path d="M206.8 222.5L206.4 207.8L220.1 209Z" fill="#6aa892"/><path d="M241 284.2L252 284.2L246.5 291.2Z" fill="#262626"/><path d="M265.6 148.6H278.7L287.3 155V175.9H265.6Z" fill="#fff"/><path d="M265.6 148.6H278.7L287.3 155V175.9H265.6Z" fill="none" stroke="#7a7a7a" stroke-width="1.8" stroke-linejoin="round"/><path d="M278.7 148.6V155H287.3" fill="none" stroke="#7a7a7a" stroke-width="1.8" stroke-linejoin="round"/><circle cx="272.2" cy="162.7" r="2" fill="#888"/><circle cx="272.2" cy="169.3" r="1.8" fill="none" stroke="#888" stroke-width="1"/><rect x="280.5" y="165" width="19.0" height="17" fill="#fff" stroke="#7a7a7a" stroke-width="1.8"/><rect x="279.6" y="164.1" width="20.8" height="5.2" fill="#3d74b6"/><line x1="286.8" y1="169.3" x2="286.8" y2="182" stroke="#b5b5b5" stroke-width="1.6"/><line x1="293.1" y1="169.3" x2="293.1" y2="182" stroke="#b5b5b5" stroke-width="1.6"/><line x1="280.5" y1="172.5" x2="299.5" y2="172.5" stroke="#b5b5b5" stroke-width="1.6"/><line x1="280.5" y1="177.5" x2="299.5" y2="177.5" stroke="#b5b5b5" stroke-width="1.6"/><path d="M270.2 198.6H284.3L294.9 206.7V230.9H270.2Z" fill="#fff"/><path d="M270.2 198.6H284.3L294.9 206.7V230.9H270.2Z" fill="none" stroke="#7a7a7a" stroke-width="1.8" stroke-linejoin="round"/><path d="M284.3 198.6V206.7H294.9" fill="none" stroke="#7a7a7a" stroke-width="1.8" stroke-linejoin="round"/><path d="M284 218.5H300.5L298.8 221V233.8H287.5V221Z" fill="#fff" stroke="#777" stroke-width="1.6"/><line x1="290" y1="223.5" x2="296" y2="223.5" stroke="#aaa" stroke-width="1"/><line x1="290" y1="226.5" x2="296" y2="226.5" stroke="#aaa" stroke-width="1"/><line x1="290" y1="229.5" x2="296" y2="229.5" stroke="#aaa" stroke-width="1"/><rect x="282.5" y="231" width="10" height="3.5" fill="#777"/><rect x="265.6" y="250.1" width="34.39999999999998" height="29.799999999999983" fill="#fff" stroke="#7a7a7a" stroke-width="2"/><rect x="264.6" y="249.1" width="36.39999999999998" height="6.7" fill="#3d74b6"/><line x1="277" y1="255.79999999999998" x2="277" y2="279.9" stroke="#b5b5b5" stroke-width="1.6"/><line x1="288.5" y1="255.79999999999998" x2="288.5" y2="279.9" stroke="#b5b5b5" stroke-width="1.6"/><line x1="265.6" y1="263" x2="300" y2="263" stroke="#b5b5b5" stroke-width="1.6"/><line x1="265.6" y1="271" x2="300" y2="271" stroke="#b5b5b5" stroke-width="1.6"/><path d="M373 260L385 260L379.0 267.3Z" fill="#262626"/><rect x="514" y="156.1" width="41.3" height="56.2" fill="#c2d5ea"/><rect x="555.3" y="156.1" width="21" height="56.2" fill="#fff"/><line x1="514" y1="167.9" x2="576.3" y2="167.9" stroke="#b8b8b8" stroke-width="1.6"/><line x1="514" y1="179" x2="576.3" y2="179" stroke="#b8b8b8" stroke-width="1.6"/><line x1="514" y1="190" x2="576.3" y2="190" stroke="#b8b8b8" stroke-width="1.6"/><line x1="514" y1="200.8" x2="576.3" y2="200.8" stroke="#b8b8b8" stroke-width="1.6"/><line x1="535.1" y1="156.1" x2="535.1" y2="212.3" stroke="#b0b0b0" stroke-width="1.6"/><line x1="555.3" y1="156.1" x2="555.3" y2="212.3" stroke="#b0b0b0" stroke-width="1.6"/><rect x="514" y="156.1" width="62.3" height="56.2" fill="none" stroke="#7d7d7d" stroke-width="2"/><path d="M570 284.2L581 284.2L575.5 291.2Z" fill="#262626"/><rect x="617.8" y="151.5" width="48" height="24.7" fill="#fff"/><path d="M617.5 151.5V176.2H630.7M653.3 176.2H666.5V151.5" fill="none" stroke="#7d7d7d" stroke-width="2"/><path d="M633.2 151.5H650.8V190L642 196L633.2 190Z" fill="#c2d5ea" stroke="#a9a9a9" stroke-width="1.4"/><path d="M626.06 192.96L628.51 193.84L630.93 194.83L633.30 195.94L635.64 197.19L637.94 198.55L640.20 200.05L642.43 201.68L644.61 203.44L646.75 205.33L648.85 207.35L650.91 209.50L652.92 211.79L654.88 214.22L656.79 216.77L658.66 219.46L660.47 222.29L661.53 221.71L660.03 218.66L658.47 215.71L656.84 212.87L655.15 210.14L653.38 207.52L651.54 205.01L649.63 202.61L647.64 200.31L645.58 198.13L643.44 196.06L641.22 194.10L638.92 192.25L636.54 190.52L634.09 188.91L631.55 187.41L628.94 186.04Z" fill="#dc5a38"/><circle cx="627.5" cy="189.5" r="3.75" fill="#dc5a38"/><path d="M628.56 219.67L630.17 217.13L631.84 214.69L633.57 212.33L635.35 210.05L637.20 207.87L639.10 205.77L641.07 203.76L643.10 201.83L645.19 199.99L647.35 198.24L649.58 196.57L651.87 194.99L654.23 193.50L656.65 192.10L659.15 190.78L661.71 189.56L661.29 188.44L658.53 189.31L655.82 190.29L653.14 191.38L650.51 192.57L647.91 193.87L645.37 195.28L642.86 196.80L640.40 198.42L637.99 200.15L635.62 202.00L633.30 203.95L631.02 206.01L628.80 208.18L626.63 210.45L624.51 212.84L622.44 215.33Z" fill="#dc5a38"/><circle cx="625.5" cy="217.5" r="3.75" fill="#dc5a38"/><path d="M667 284.2L678 284.2L672.5 291.2Z" fill="#262626"/><rect x="727.4" y="151.2" width="67.4" height="21.7" fill="#4a7fbe"/><rect x="727.4" y="178.5" width="67.39999999999998" height="38.5" fill="#fff" stroke="#7a7a7a" stroke-width="2"/><line x1="751" y1="178.5" x2="751" y2="217" stroke="#8a8a8a" stroke-width="1.6"/><line x1="773.3" y1="178.5" x2="773.3" y2="217" stroke="#8a8a8a" stroke-width="1.6"/><line x1="727.4" y1="198" x2="794.8" y2="198" stroke="#8a8a8a" stroke-width="1.6"/><path d="M765 163.2L778.5 174.3L797.5 150" fill="none" stroke="#f6f3f4" stroke-width="9"/><path d="M765 163.2L778.5 174.3L797.5 150" fill="none" stroke="#5e9e80" stroke-width="4.8"/><path d="M788 283L798.4 283L793.2 290Z" fill="#262626"/><rect x="824.9" y="151.2" width="66.9" height="21.7" fill="#4a7fbe"/><rect x="824.9" y="178.5" width="66.89999999999998" height="38.5" fill="#fff" stroke="#7a7a7a" stroke-width="2"/><line x1="848" y1="178.5" x2="848" y2="217" stroke="#8a8a8a" stroke-width="1.6"/><line x1="869.5" y1="178.5" x2="869.5" y2="217" stroke="#8a8a8a" stroke-width="1.6"/><line x1="824.9" y1="198" x2="891.8" y2="198" stroke="#8a8a8a" stroke-width="1.6"/><path d="M872.56 174.17L873.49 172.73L874.48 171.31L875.54 169.90L876.68 168.51L877.88 167.13L879.16 165.78L880.51 164.44L881.93 163.12L883.42 161.81L884.98 160.53L886.62 159.27L888.33 158.03L890.11 156.81L891.97 155.61L893.90 154.44L895.89 153.29L894.11 149.71L891.92 150.71L889.80 151.74L887.73 152.81L885.73 153.91L883.79 155.04L881.91 156.20L880.09 157.40L878.32 158.63L876.62 159.90L874.98 161.21L873.40 162.55L871.89 163.93L870.43 165.35L869.04 166.80L867.71 168.30L866.44 169.83Z" fill="#f6f3f4"/><circle cx="869.5" cy="172" r="3.75" fill="#f6f3f4"/><path d="M868.77 155.32L870.12 155.95L871.51 156.66L872.93 157.46L874.38 158.35L875.85 159.34L877.35 160.42L878.87 161.59L880.41 162.85L881.97 164.20L883.55 165.64L885.15 167.18L886.77 168.80L888.41 170.52L890.06 172.33L891.73 174.23L893.41 176.21L896.59 173.79L895.04 171.61L893.49 169.52L891.95 167.50L890.42 165.57L888.89 163.72L887.37 161.95L885.86 160.26L884.34 158.65L882.83 157.13L881.32 155.68L879.82 154.31L878.31 153.02L876.80 151.81L875.28 150.69L873.76 149.64L872.23 148.68Z" fill="#f6f3f4"/><circle cx="870.5" cy="152" r="3.75" fill="#f6f3f4"/><path d="M871.54 173.45L872.48 171.96L873.49 170.49L874.57 169.04L875.73 167.60L876.95 166.18L878.25 164.78L879.62 163.40L881.06 162.04L882.58 160.70L884.17 159.39L885.83 158.09L887.56 156.81L889.37 155.56L891.25 154.33L893.20 153.13L895.22 151.95L894.78 151.05L892.62 152.02L890.52 153.03L888.48 154.06L886.50 155.12L884.58 156.22L882.72 157.35L880.92 158.51L879.19 159.71L877.51 160.94L875.89 162.20L874.33 163.50L872.83 164.84L871.40 166.21L870.02 167.62L868.71 169.07L867.46 170.55Z" fill="#dc5a38"/><circle cx="869.5" cy="172" r="2.5" fill="#dc5a38"/><path d="M869.34 154.22L870.76 154.85L872.20 155.57L873.67 156.39L875.16 157.30L876.67 158.30L878.21 159.39L879.77 160.57L881.35 161.84L882.95 163.21L884.56 164.67L886.20 166.21L887.85 167.85L889.51 169.58L891.19 171.40L892.89 173.31L894.60 175.30L895.40 174.70L893.87 172.53L892.35 170.45L890.84 168.44L889.34 166.52L887.85 164.69L886.36 162.93L884.88 161.25L883.40 159.66L881.93 158.14L880.46 156.71L878.99 155.35L877.53 154.08L876.07 152.88L874.60 151.77L873.13 150.74L871.66 149.78Z" fill="#dc5a38"/><circle cx="870.5" cy="152" r="2.5" fill="#dc5a38"/><path d="M884.8 283L896 283L890.4 290Z" fill="#262626"/><text x="967" y="164" font-family="Liberation Sans" font-weight="bold" font-size="19" fill="#3d74b6">A</text><text x="967.5" y="183" font-family="Liberation Sans" font-weight="bold" font-size="19" fill="#8a5cb8">Z</text><path d="M989.2 150.6V182.4M983.8 177L989.2 182.6L994.6 177" fill="none" stroke="#666" stroke-width="1.8"/><text x="967.5" y="214" font-family="Liberation Sans" font-weight="bold" font-size="19" fill="#8a5cb8">Z</text><text x="967" y="233" font-family="Liberation Sans" font-weight="bold" font-size="19" fill="#3d74b6">A</text><path d="M989.2 200.8V232.5M983.8 227L989.2 232.7L994.6 227" fill="none" stroke="#666" stroke-width="1.8"/><path d="M1069.7 217V183.5H1087.4M1114.7 183.5H1133.2V217" fill="#fff" stroke="#7d7d7d" stroke-width="2"/><rect x="1069.7" y="184.5" width="17.7" height="32.5" fill="#fff"/><rect x="1114.7" y="184.5" width="18.5" height="32.5" fill="#fff"/><rect x="1087.4" y="157.6" width="9.7" height="59.4" fill="#c2d5ea" stroke="#a9a9a9" stroke-width="1.2"/><rect x="1105.3" y="157.6" width="9.4" height="59.4" fill="#c2d5ea" stroke="#a9a9a9" stroke-width="1.2"/><path d="M1095 152.2H1107.7L1101.3 157.5Z" fill="#3d74b6"/><path d="M1125.8 283L1137 283L1131.4 290Z" fill="#262626"/><rect x="1165.8" y="163.4" width="47.8" height="13.7" fill="#fff" stroke="#7d7d7d" stroke-width="2"/><rect x="1184" y="191" width="46.3" height="14" fill="#fff" stroke="#7d7d7d" stroke-width="2"/><line x1="1199.6" y1="177.1" x2="1212.2" y2="191" stroke="#7d7d7d" stroke-width="1.8"/><path d="M1491 160.5L1502 160.5L1496.5 167.5Z" fill="#262626"/><rect x="1254.4" y="198.4" width="32.69999999999982" height="32.69999999999999" fill="#fff" stroke="#7a7a7a" stroke-width="2"/><rect x="1253.4" y="197.4" width="34.69999999999982" height="7.1" fill="#3d74b6"/><line x1="1262.8" y1="204.5" x2="1262.8" y2="231.1" stroke="#b0b0b0" stroke-width="1.6"/><line x1="1270.6" y1="204.5" x2="1270.6" y2="231.1" stroke="#b0b0b0" stroke-width="1.6"/><line x1="1278.4" y1="204.5" x2="1278.4" y2="231.1" stroke="#b0b0b0" stroke-width="1.6"/><line x1="1254.4" y1="211.7" x2="1287.1" y2="211.7" stroke="#b0b0b0" stroke-width="1.6"/><line x1="1254.4" y1="217.8" x2="1287.1" y2="217.8" stroke="#b0b0b0" stroke-width="1.6"/><line x1="1254.4" y1="224.5" x2="1287.1" y2="224.5" stroke="#b0b0b0" stroke-width="1.6"/><line x1="1262.8" y1="198.4" x2="1262.8" y2="204.5" stroke="#8fb0d8" stroke-width="1.2"/><line x1="1270.6" y1="198.4" x2="1270.6" y2="204.5" stroke="#8fb0d8" stroke-width="1.2"/><line x1="1278.4" y1="198.4" x2="1278.4" y2="204.5" stroke="#8fb0d8" stroke-width="1.2"/><path d="M1609 210.5L1620.5 210.5L1614.75 217.5Z" fill="#262626"/><text x="1253.5" y="264.2" font-family="Liberation Serif" font-size="19" fill="#333">1</text><path d="M1258.8 269.6C1260 275 1265 275.6 1271 274.8" fill="none" stroke="#3d74b6" stroke-width="3.4"/><path d="M1266.4 268.6L1270.2 268.6L1276.3 274.6L1270.2 281L1266.4 281L1271.3 274.7Z" fill="#3d74b6"/><text x="1278.6" y="281.4" font-family="Liberation Sans" font-size="19" fill="#333">2</text><path d="M1659.1 169.3V148.6H1683.9V159" fill="#fff" stroke="#777" stroke-width="1.8"/><rect x="1659.1" y="148" width="24.8" height="5" fill="#3d74b6"/><line x1="1660" y1="158" x2="1667" y2="158" stroke="#aaa" stroke-width="1.2"/><line x1="1660" y1="164" x2="1667" y2="164" stroke="#aaa" stroke-width="1.2"/><rect x="1668.7" y="159.7" width="24.299999999999955" height="22.200000000000017" fill="#fff" stroke="#7a7a7a" stroke-width="1.8"/><rect x="1667.8" y="158.79999999999998" width="26.099999999999955" height="5.2" fill="#3d74b6"/><line x1="1676.8" y1="164.0" x2="1676.8" y2="181.9" stroke="#b0b0b0" stroke-width="1.6"/><line x1="1684.9" y1="164.0" x2="1684.9" y2="181.9" stroke="#b0b0b0" stroke-width="1.6"/><line x1="1668.7" y1="169.5" x2="1693" y2="169.5" stroke="#b0b0b0" stroke-width="1.6"/><line x1="1668.7" y1="175.7" x2="1693" y2="175.7" stroke="#b0b0b0" stroke-width="1.6"/><path d="M1658 173.3C1661 177 1666 177.4 1670.5 177.4" fill="none" stroke="#3d74b6" stroke-width="3.6"/><path d="M1667 171.3H1670.8L1676 177.5L1670.8 184H1667L1671.6 177.5Z" fill="#3d74b6"/><path d="M1863 160.5L1874 160.5L1868.5 167.5Z" fill="#262626"/><rect x="1660.7" y="198.6" width="29.3" height="8.9" fill="#fff" stroke="#777" stroke-width="1.8"/><rect x="1659.8" y="197.8" width="31.1" height="5.3" fill="#3d74b6"/><line x1="1670.5" y1="203" x2="1670.5" y2="207.5" stroke="#999" stroke-width="1.2"/><line x1="1680.2" y1="203" x2="1680.2" y2="207.5" stroke="#999" stroke-width="1.2"/><rect x="1660.7" y="226.9" width="29.3" height="5.5" fill="#fff" stroke="#777" stroke-width="1.8"/><line x1="1670.5" y1="226.9" x2="1670.5" y2="232.4" stroke="#999" stroke-width="1.2"/><line x1="1680.2" y1="226.9" x2="1680.2" y2="232.4" stroke="#999" stroke-width="1.2"/><path d="M1675.3 210L1679.5 214.6H1671.1Z M1675.3 223L1679.5 218.4H1671.1Z" fill="#3d74b6"/><line x1="1675.3" y1="213" x2="1675.3" y2="220" stroke="#3d74b6" stroke-width="1.6"/><path d="M1856 210.5L1867 210.5L1861.5 217.5Z" fill="#262626"/><rect x="1660.3" y="249.3" width="32" height="32.4" fill="#eef4fb" stroke="#9fb8d8" stroke-width="1.6"/><path d="M1669.2 254.6V271M1664.8 266.5L1669.2 271.3L1673.6 266.5M1683.4 254.6V271M1679 266.5L1683.4 271.3L1687.8 266.5" fill="none" stroke="#9fb8d8" stroke-width="1.5"/><line x1="1662.7" y1="275.9" x2="1690" y2="275.9" stroke="#9fb8d8" stroke-width="1.5"/><rect x="1946.5" y="151.5" width="50.1" height="65.8" fill="#fff" stroke="#888" stroke-width="2"/><line x1="1949.8" y1="157" x2="1963.7" y2="157" stroke="#888" stroke-width="1.6"/><line x1="1949.8" y1="177.2" x2="1963.7" y2="177.2" stroke="#888" stroke-width="1.6"/><line x1="1949.8" y1="196.2" x2="1963.7" y2="196.2" stroke="#888" stroke-width="1.6"/><rect x="1969.6" y="157.39999999999998" width="21" height="12.900000000000011" rx="1" fill="#fff" stroke="#4a7fc0" stroke-width="1.8"/><rect x="1969.6" y="177.89999999999998" width="21" height="13.000000000000005" rx="1" fill="#fff" stroke="#4a7fc0" stroke-width="1.8"/><rect x="1969.6" y="196.6" width="21" height="12.899999999999983" rx="1" fill="#fff" stroke="#4a7fc0" stroke-width="1.8"/><path d="M2009 284.2L2020 284.2L2014.5 291.2Z" fill="#262626"/><path d="M2099.8 152H2131.8L2147 167.7V216.4H2099.8Z" fill="#fff"/><path d="M2147 184.4V167.7L2131.8 152H2099.8V216.4H2122.7" fill="none" stroke="#7a7a7a" stroke-width="2" stroke-linejoin="round"/><path d="M2131.8 152V167.7H2147" fill="none" stroke="#7a7a7a" stroke-width="2" stroke-linejoin="round"/><path d="M2136.49 185.18L2137.25 178.61L2143.35 178.61L2144.11 185.18L2148.23 186.88L2153.41 182.78L2157.72 187.09L2153.62 192.27L2155.32 196.39L2161.89 197.15L2161.89 203.25L2155.32 204.01L2153.62 208.13L2157.72 213.31L2153.41 217.62L2148.23 213.52L2144.11 215.22L2143.35 221.79L2137.25 221.79L2136.49 215.22L2132.37 213.52L2127.19 217.62L2122.88 213.31L2126.98 208.13L2125.28 204.01L2118.71 203.25L2118.71 197.15L2125.28 196.39L2126.98 192.27L2122.88 187.09L2127.19 182.78L2132.37 186.88ZM2147.9 200.2A7.6 7.6 0 1 0 2132.7000000000003 200.2A7.6 7.6 0 1 0 2147.9 200.2Z" fill="#e88a3c" fill-rule="evenodd"/><path d="M2225.2 149.1H2242.3L2250.9 156.7V182.4H2225.2Z" fill="#fff"/><path d="M2250.9 163.7V156.7L2242.3 149.1H2225.2V182.4H2241.3" fill="none" stroke="#7a7a7a" stroke-width="1.8" stroke-linejoin="round"/><path d="M2242.3 149.1V156.7H2250.9" fill="none" stroke="#7a7a7a" stroke-width="1.8" stroke-linejoin="round"/><path d="M2242.8 168.5V181.5A7.35 2.5 0 0 0 2257.5 181.5V168.5Z" fill="#e8c07a"/><ellipse cx="2250.15" cy="167.8" rx="7.35" ry="2.4" fill="#e8c07a"/><path d="M2242.8 169.5A7.35 2.4 0 0 0 2257.5 169.5" fill="none" stroke="#fff" stroke-width="1.2"/><path d="M2405 160.5L2417.5 160.5L2411.25 168Z" fill="#262626"/><path d="M2225.2 199.1H2242.3L2250.9 206.7V232.4H2225.2Z" fill="#fff"/><path d="M2250.9 213.2V206.7L2242.3 199.1H2225.2V232.4H2238.8" fill="none" stroke="#7a7a7a" stroke-width="1.8" stroke-linejoin="round"/><path d="M2242.3 199.1V206.7H2250.9" fill="none" stroke="#7a7a7a" stroke-width="1.8" stroke-linejoin="round"/><circle cx="2247.9" cy="224.8" r="8.3" fill="#fff" stroke="#4a7fc0" stroke-width="2"/><path d="M2246.8 220V226.3H2251" fill="none" stroke="#555" stroke-width="1.6"/><path d="M2413 210.5L2424.5 210.5L2418.75 218Z" fill="#262626"/><rect x="2221.6" y="250.1" width="34.40000000000009" height="29.299999999999983" fill="#fff" stroke="#7a7a7a" stroke-width="2"/><rect x="2220.6" y="249.1" width="36.40000000000009" height="6.6" fill="#3d74b6"/><line x1="2233.5" y1="255.7" x2="2233.5" y2="279.4" stroke="#b5b5b5" stroke-width="1.6"/><line x1="2244.5" y1="255.7" x2="2244.5" y2="279.4" stroke="#b5b5b5" stroke-width="1.6"/><line x1="2221.6" y1="263.2" x2="2256" y2="263.2" stroke="#b5b5b5" stroke-width="1.6"/><line x1="2221.6" y1="271" x2="2256" y2="271" stroke="#b5b5b5" stroke-width="1.6"/><path d="M549 409.5L535.5 421.2L549 433" fill="none" stroke="#6a6a6a" stroke-width="5"/><rect x="47" y="455" width="34" height="29" fill="#fff" stroke="#6f6f6f" stroke-width="2"/><rect x="46.0" y="454.0" width="36" height="6.3" fill="#3d74b6"/><line x1="58.3" y1="460.3" x2="58.3" y2="484" stroke="#9a9a9a" stroke-width="1.6"/><line x1="69.6" y1="460.3" x2="69.6" y2="484" stroke="#9a9a9a" stroke-width="1.6"/><line x1="47" y1="465.5" x2="81" y2="465.5" stroke="#9a9a9a" stroke-width="1.6"/><line x1="47" y1="475" x2="81" y2="475" stroke="#9a9a9a" stroke-width="1.6"/><path d="M618.24 421.94L620.02 422.75L621.81 423.66L623.62 424.66L625.43 425.77L627.25 426.97L629.08 428.27L630.92 429.68L632.76 431.18L634.60 432.78L636.45 434.49L638.31 436.29L640.16 438.19L642.02 440.19L643.88 442.29L645.74 444.49L647.59 446.79L648.41 446.21L646.76 443.73L645.11 441.33L643.45 439.03L641.78 436.81L640.10 434.68L638.41 432.64L636.71 430.69L634.99 428.82L633.27 427.04L631.53 425.35L629.78 423.75L628.01 422.23L626.22 420.81L624.42 419.47L622.60 418.22L620.76 417.06Z" fill="#c9c9c9"/><circle cx="619.5" cy="419.5" r="2.75" fill="#c9c9c9"/><path d="M619.80 445.01L620.85 443.24L622.00 441.49L623.24 439.76L624.59 438.06L626.04 436.39L627.59 434.74L629.24 433.12L630.99 431.53L632.85 429.97L634.81 428.44L636.87 426.95L639.03 425.48L641.30 424.05L643.67 422.65L646.13 421.29L648.70 419.96L648.30 419.04L645.59 420.13L642.96 421.26L640.42 422.43L637.97 423.64L635.60 424.90L633.32 426.21L631.12 427.56L629.01 428.97L626.98 430.41L625.04 431.91L623.18 433.46L621.41 435.06L619.72 436.71L618.13 438.42L616.62 440.18L615.20 441.99Z" fill="#c9c9c9"/><circle cx="617.5" cy="443.5" r="2.75" fill="#c9c9c9"/><path d="M705.5 430.5L716.5 443L735 418.5" fill="none" stroke="#c9c9c9" stroke-width="4.2"/><path d="M799.5 416.5C796 414 792.5 415.5 791.5 420L786 445C785 448.5 782 449 780.5 447.5" fill="none" stroke="#5a5a5a" stroke-width="2"/><line x1="785" y1="428" x2="797" y2="428" stroke="#5a5a5a" stroke-width="1.8"/><text x="793.5" y="442" font-family="Liberation Serif" font-style="italic" font-size="27" fill="#5a5a5a">x</text><path d="M2084.5 428.5L2096 440.5L2107.5 428.5" fill="none" stroke="#555" stroke-width="3"/><rect x="1160.5" y="461.6" width="2.0" height="3" fill="#a31515"/><rect x="1182.8" y="461.6" width="13.700000000000045" height="3" fill="#a31515"/><rect x="1213.6" y="461.6" width="2.0" height="3" fill="#a31515"/><rect x="1498" y="461.6" width="2.5" height="3" fill="#a31515"/><rect x="1503" y="461.6" width="2" height="3" fill="#a31515"/><rect x="1506.5" y="461.6" width="2.5" height="3" fill="#a31515"/><rect x="1513.5" y="461.6" width="2.0" height="3" fill="#a31515"/><rect x="1529.5" y="461.6" width="16.90000000000009" height="3" fill="#a31515"/><rect x="596.7" y="488.9" width="29.699999999999932" height="25.0" fill="#fff" stroke="#6a6a6a" stroke-width="1.8"/><rect x="595.8000000000001" y="488.0" width="31.499999999999932" height="7.2" fill="#3d74b6"/><line x1="606.6" y1="495.2" x2="606.6" y2="513.9" stroke="#b0b0b0" stroke-width="1.6"/><line x1="616.5" y1="495.2" x2="616.5" y2="513.9" stroke="#b0b0b0" stroke-width="1.6"/><line x1="596.7" y1="501.5" x2="626.4" y2="501.5" stroke="#b0b0b0" stroke-width="1.6"/><line x1="596.7" y1="507.5" x2="626.4" y2="507.5" stroke="#b0b0b0" stroke-width="1.6"/><path d="M628.3 507.7L639.2 507.7L633.75 513.9Z" fill="#666"/><rect x="657.4" y="482.8" width="33" height="29.2" fill="#fff" stroke="#6f6f6f" stroke-width="1.8"/><rect x="656.5" y="482" width="34.8" height="6.6" fill="#6f6f6f"/><line x1="665.6" y1="488.5" x2="665.6" y2="512" stroke="#bdbdbd" stroke-width="1.2" stroke-dasharray="2.5 3"/><line x1="674.8" y1="488.5" x2="674.8" y2="512" stroke="#bdbdbd" stroke-width="1.2" stroke-dasharray="2.5 3"/><line x1="683.5" y1="488.5" x2="683.5" y2="512" stroke="#bdbdbd" stroke-width="1.2" stroke-dasharray="2.5 3"/><line x1="657.4" y1="495.6" x2="690.4" y2="495.6" stroke="#bdbdbd" stroke-width="1.2" stroke-dasharray="2.5 3"/><line x1="657.4" y1="504.8" x2="690.4" y2="504.8" stroke="#bdbdbd" stroke-width="1.2" stroke-dasharray="2.5 3"/><rect x="666.2" y="496.2" width="8" height="8" fill="#fff" stroke="#e8761f" stroke-width="2"/><circle cx="685.8" cy="510.6" r="9" fill="#fff" stroke="#4a7fc0" stroke-width="1.8"/><path d="M684.8 505.5V511.5H689" fill="none" stroke="#555" stroke-width="1.6"/><text x="1034.2" y="509.4" font-family="Liberation Sans" font-size="22" fill="#555">A</text><text x="1048.0" y="503.2" font-family="Liberation Sans" font-size="18.5" fill="#555" textLength="9.5" lengthAdjust="spacingAndGlyphs">B</text><text x="1055.2" y="515" font-family="Liberation Sans" font-size="20" fill="#555">C</text><text x="1408.9" y="509.4" font-family="Liberation Sans" font-size="22" fill="#555">A</text><text x="1422.7" y="503.2" font-family="Liberation Sans" font-size="18.5" fill="#555" textLength="9.5" lengthAdjust="spacingAndGlyphs">B</text><text x="1429.9" y="515" font-family="Liberation Sans" font-size="20" fill="#555">C</text><text x="1783.5" y="512.5" font-family="Liberation Sans" font-size="21" fill="#555">1</text><text x="1794.5" y="505" font-family="Liberation Sans" font-size="18" fill="#555">2</text><text x="1805" y="516.8" font-family="Liberation Sans" font-size="21" fill="#555">3</text><rect x="984.0999999999999" y="484" width="35.4" height="35.2" fill="#fff" stroke="#c6c6c6" stroke-width="1.6"/><path d="M993.8 497.3L1009.3 497.3L1001.55 505Z" fill="#666"/><rect x="1358.7" y="484" width="35.4" height="35.2" fill="#fff" stroke="#c6c6c6" stroke-width="1.6"/><path d="M1368.4 497.3L1383.9 497.3L1376.15 505Z" fill="#666"/><rect x="1733.7" y="484" width="35.4" height="35.2" fill="#fff" stroke="#c6c6c6" stroke-width="1.6"/><path d="M1743.4 497.3L1758.9 497.3L1751.15 505Z" fill="#666"/><rect x="2108" y="483.5" width="20" height="35.2" fill="#fff" stroke="#c6c6c6" stroke-width="1.6"/><path d="M2092.5 595L2103.5 583L2114.5 595" fill="none" stroke="#616161" stroke-width="6"/><path d="M2092.5 1476L2103.5 1488L2114.5 1476" fill="none" stroke="#616161" stroke-width="6"/><path d="M711.5 1542.5L699 1554.3L711.5 1566" fill="none" stroke="#616161" stroke-width="6"/><path d="M2025.5 1542.5L2038 1554.3L2025.5 1566" fill="none" stroke="#616161" stroke-width="6"/><path d="M2670 435L2694.5 458.5M2694.5 435L2670 458.5" stroke="#6a6a6a" stroke-width="2.2"/><path d="M2174.8 525.5V541.2H2159Z" fill="#555"/><path d="M2174.8 763V779H2159Z" fill="#555"/><path d="M2206 868L2227.5 886M2227.5 868L2206 886" stroke="#6a6a6a" stroke-width="3.2"/></svg>
<div style="position:absolute;left:212.58px;top:25.00px;font-family:'Liberation Sans', sans-serif;font-size:27.067px;line-height:1;white-space:pre;color:#1b1b1b;transform:scaleX(0.8624);transform-origin:0 0;">テーブル1 - Power Query エディター</div><div style="position:absolute;left:26.37px;top:81.30px;font-family:'Liberation Sans', sans-serif;font-size:28.939px;line-height:1;white-space:pre;color:#ffffff;transform:scaleX(0.6776);transform-origin:0 0;">ファイル</div><div style="position:absolute;left:165.29px;top:84.40px;font-family:'Liberation Sans', sans-serif;font-size:29.714px;line-height:1;white-space:pre;color:#262626;transform:scaleX(0.7102);transform-origin:0 0;">ホーム</div><div style="position:absolute;left:293.85px;top:90.50px;font-family:'Liberation Sans', sans-serif;font-size:23.600px;line-height:1;white-space:pre;color:#262626;transform:scaleX(1.1522);transform-origin:0 0;">変換</div><div style="position:absolute;left:415.00px;top:89.50px;font-family:'Liberation Sans', sans-serif;font-size:24.544px;line-height:1;white-space:pre;color:#262626;transform:scaleX(1.0606);transform-origin:0 0;">列の追加</div><div style="position:absolute;left:584.90px;top:89.00px;font-family:'Liberation Sans', sans-serif;font-size:25.567px;line-height:1;white-space:pre;color:#262626;transform:scaleX(1.1000);transform-origin:0 0;">表示</div><div style="position:absolute;left:21.89px;top:237.25px;font-family:'Liberation Sans', sans-serif;font-size:26.104px;line-height:1;white-space:pre;color:#262626;transform:scaleX(0.9058);transform-origin:0 0;">閉じて読</div><div style="position:absolute;left:22.66px;top:277.60px;font-family:'Liberation Sans', sans-serif;font-size:23.800px;line-height:1;white-space:pre;color:#262626;transform:scaleX(1.0394);transform-origin:0 0;">み込む</div><div style="position:absolute;left:37.08px;top:337.25px;font-family:'Liberation Sans', sans-serif;font-size:25.458px;line-height:1;white-space:pre;color:#262626;transform:scaleX(0.9167);transform-origin:0 0;">閉じる</div><div style="position:absolute;left:153.27px;top:237.55px;font-family:'Liberation Sans', sans-serif;font-size:27.560px;line-height:1;white-space:pre;color:#262626;transform:scaleX(0.6671);transform-origin:0 0;">プレビュー</div><div style="position:absolute;left:152.96px;top:278.10px;font-family:'Liberation Sans', sans-serif;font-size:24.752px;line-height:1;white-space:pre;color:#262626;transform:scaleX(1.0405);transform-origin:0 0;">の更新</div><div style="position:absolute;left:306.39px;top:153.00px;font-family:'Liberation Sans', sans-serif;font-size:26.000px;line-height:1;white-space:pre;color:#262626;transform:scaleX(0.8031);transform-origin:0 0;">プロパティ</div><div style="position:absolute;left:309.00px;top:202.75px;font-family:'Liberation Sans', sans-serif;font-size:26.520px;line-height:1;white-space:pre;color:#262626;transform:scaleX(0.8115);transform-origin:0 0;">詳細エディター</div><div style="position:absolute;left:307.94px;top:251.00px;font-family:'Liberation Sans', sans-serif;font-size:27.083px;line-height:1;white-space:pre;color:#262626;transform:scaleX(1.0577);transform-origin:0 0;">管理</div><div style="position:absolute;left:276.59px;top:335.25px;font-family:'Liberation Sans', sans-serif;font-size:27.773px;line-height:1;white-space:pre;color:#262626;transform:scaleX(0.8026);transform-origin:0 0;">クエリ</div><div style="position:absolute;left:519.60px;top:237.25px;font-family:'Liberation Sans', sans-serif;font-size:26.104px;line-height:1;white-space:pre;color:#262626;transform:scaleX(0.9569);transform-origin:0 0;">列の</div><div style="position:absolute;left:505.94px;top:277.10px;font-family:'Liberation Sans', sans-serif;font-size:25.792px;line-height:1;white-space:pre;color:#262626;transform:scaleX(1.0600);transform-origin:0 0;">選択</div><div style="position:absolute;left:615.80px;top:237.25px;font-family:'Liberation Sans', sans-serif;font-size:26.104px;line-height:1;white-space:pre;color:#262626;transform:scaleX(0.9843);transform-origin:0 0;">列の</div><div style="position:absolute;left:603.48px;top:277.10px;font-family:'Liberation Sans', sans-serif;font-size:25.792px;line-height:1;white-space:pre;color:#262626;transform:scaleX(1.1160);transform-origin:0 0;">削除</div><div style="position:absolute;left:537.87px;top:338.25px;font-family:'Liberation Sans', sans-serif;font-size:24.440px;line-height:1;white-space:pre;color:#262626;transform:scaleX(1.1263);transform-origin:0 0;">列の管理</div><div style="position:absolute;left:735.98px;top:236.50px;font-family:'Liberation Sans', sans-serif;font-size:24.960px;line-height:1;white-space:pre;color:#262626;transform:scaleX(1.0208);transform-origin:0 0;">行の</div><div style="position:absolute;left:724.60px;top:275.00px;font-family:'Liberation Sans', sans-serif;font-size:24.960px;line-height:1;white-space:pre;color:#262626;transform:scaleX(1.0796);transform-origin:0 0;">保持</div><div style="position:absolute;left:834.00px;top:236.50px;font-family:'Liberation Sans', sans-serif;font-size:24.960px;line-height:1;white-space:pre;color:#262626;">行の</div><div style="position:absolute;left:820.90px;top:275.50px;font-family:'Liberation Sans', sans-serif;font-size:24.960px;line-height:1;white-space:pre;color:#262626;transform:scaleX(1.1042);transform-origin:0 0;">削除</div><div style="position:absolute;left:758.00px;top:339.00px;font-family:'Liberation Sans', sans-serif;font-size:23.920px;line-height:1;white-space:pre;color:#262626;transform:scaleX(1.0833);transform-origin:0 0;">行の削減</div><div style="position:absolute;left:929.95px;top:338.50px;font-family:'Liberation Sans', sans-serif;font-size:23.920px;line-height:1;white-space:pre;color:#262626;transform:scaleX(1.0532);transform-origin:0 0;">並べ替え</div><div style="position:absolute;left:1076.00px;top:236.00px;font-family:'Liberation Sans', sans-serif;font-size:24.960px;line-height:1;white-space:pre;color:#262626;transform:scaleX(0.9592);transform-origin:0 0;">列の</div><div style="position:absolute;left:1061.87px;top:275.50px;font-family:'Liberation Sans', sans-serif;font-size:24.960px;line-height:1;white-space:pre;color:#262626;transform:scaleX(1.1333);transform-origin:0 0;">分割</div><div style="position:absolute;left:1165.77px;top:235.00px;font-family:'Liberation Sans', sans-serif;font-size:27.130px;line-height:1;white-space:pre;color:#262626;transform:scaleX(0.7436);transform-origin:0 0;">グルー</div><div style="position:absolute;left:1170.04px;top:276.00px;font-family:'Liberation Sans', sans-serif;font-size:24.960px;line-height:1;white-space:pre;color:#262626;transform:scaleX(0.9796);transform-origin:0 0;">プ化</div><div style="position:absolute;left:1252.01px;top:153.75px;font-family:'Liberation Sans', sans-serif;font-size:25.500px;line-height:1;white-space:pre;color:#262626;transform:scaleX(0.9904);transform-origin:0 0;">データ型: 日付/時刻</div><div style="position:absolute;left:1295.22px;top:202.65px;font-family:'Liberation Sans', sans-serif;font-size:26.104px;line-height:1;white-space:pre;color:#262626;transform:scaleX(0.8923);transform-origin:0 0;">1 行目をヘッダーとして使用</div><div style="position:absolute;left:1297.00px;top:252.75px;font-family:'Liberation Sans', sans-serif;font-size:26.104px;line-height:1;white-space:pre;color:#262626;transform:scaleX(1.0192);transform-origin:0 0;">値の置換</div><div style="position:absolute;left:1311.27px;top:339.50px;font-family:'Liberation Sans', sans-serif;font-size:23.000px;line-height:1;white-space:pre;color:#262626;transform:scaleX(1.2341);transform-origin:0 0;">変換</div><div style="position:absolute;left:1698.87px;top:149.25px;font-family:'Liberation Sans', sans-serif;font-size:29.900px;line-height:1;white-space:pre;color:#262626;transform:scaleX(0.7095);transform-origin:0 0;">クエリのマージ</div><div style="position:absolute;left:1698.34px;top:202.15px;font-family:'Liberation Sans', sans-serif;font-size:27.192px;line-height:1;white-space:pre;color:#262626;transform:scaleX(0.8875);transform-origin:0 0;">クエリの追加</div><div style="position:absolute;left:1698.41px;top:252.75px;font-family:'Liberation Sans', sans-serif;font-size:26.104px;line-height:1;white-space:pre;color:#a3a3a3;transform:scaleX(0.8634);transform-origin:0 0;">ファイルの結合</div><div style="position:absolute;left:1740.00px;top:338.00px;font-family:'Liberation Sans', sans-serif;font-size:23.920px;line-height:1;white-space:pre;color:#262626;transform:scaleX(1.1277);transform-origin:0 0;">結合</div><div style="position:absolute;left:1912.00px;top:235.45px;font-family:'Liberation Sans', sans-serif;font-size:28.374px;line-height:1;white-space:pre;color:#262626;transform:scaleX(0.6941);transform-origin:0 0;">パラメーター</div><div style="position:absolute;left:1920.47px;top:277.20px;font-family:'Liberation Sans', sans-serif;font-size:25.567px;line-height:1;white-space:pre;color:#262626;transform:scaleX(1.0325);transform-origin:0 0;">の管理</div><div style="position:absolute;left:1912.00px;top:336.55px;font-family:'Liberation Sans', sans-serif;font-size:26.791px;line-height:1;white-space:pre;color:#262626;transform:scaleX(0.7195);transform-origin:0 0;">パラメーター</div><div style="position:absolute;left:2069.54px;top:232.00px;font-family:'Liberation Sans', sans-serif;font-size:28.261px;line-height:1;white-space:pre;color:#262626;transform:scaleX(0.7279);transform-origin:0 0;">データ ソー</div><div style="position:absolute;left:2083.89px;top:275.50px;font-family:'Liberation Sans', sans-serif;font-size:25.000px;line-height:1;white-space:pre;color:#262626;transform:scaleX(1.0556);transform-origin:0 0;">ス設定</div><div style="position:absolute;left:2060.24px;top:335.00px;font-family:'Liberation Sans', sans-serif;font-size:27.130px;line-height:1;white-space:pre;color:#262626;transform:scaleX(0.7574);transform-origin:0 0;">データ ソース</div><div style="position:absolute;left:2263.59px;top:154.00px;font-family:'Liberation Sans', sans-serif;font-size:24.000px;line-height:1;white-space:pre;color:#262626;transform:scaleX(0.9126);transform-origin:0 0;">新しいソース</div><div style="position:absolute;left:2264.00px;top:203.50px;font-family:'Liberation Sans', sans-serif;font-size:27.083px;line-height:1;white-space:pre;color:#262626;transform:scaleX(0.8571);transform-origin:0 0;">最近のソース</div><div style="position:absolute;left:2263.05px;top:253.00px;font-family:'Liberation Sans', sans-serif;font-size:25.000px;line-height:1;white-space:pre;color:#262626;transform:scaleX(0.9459);transform-origin:0 0;">データの入力</div><div style="position:absolute;left:2254.06px;top:338.00px;font-family:'Liberation Sans', sans-serif;font-size:24.000px;line-height:1;white-space:pre;color:#262626;transform:scaleX(0.9433);transform-origin:0 0;">新しいクエリ</div><div style="position:absolute;left:31.73px;top:407.80px;font-family:'Liberation Sans', sans-serif;font-size:27.704px;line-height:1;white-space:pre;color:#217346;transform:scaleX(0.9566);transform-origin:0 0;">クエリ</div><div style="position:absolute;left:118.32px;top:412.85px;font-family:'Liberation Sans', sans-serif;font-size:23.700px;line-height:1;white-space:pre;color:#6f7f75;transform:scaleX(0.8391);transform-origin:0 0;">[1]</div><div style="position:absolute;left:99.88px;top:459.00px;font-family:'Liberation Sans', sans-serif;font-size:25.920px;line-height:1;white-space:pre;color:#333333;transform:scaleX(1.0593);transform-origin:0 0;">テーブル1</div><div style="position:absolute;left:869.17px;top:420.75px;font-family:'Liberation Mono', monospace;font-size:28.377px;line-height:1;white-space:pre;color:#000000;transform:scaleX(0.9133);transform-origin:0 0;">= Table.TransformColumnTypes(</div><div style="position:absolute;left:1317.62px;top:416.85px;font-family:'Liberation Sans', sans-serif;font-size:28.750px;line-height:1;white-space:pre;color:#000000;transform:scaleX(0.9688);transform-origin:0 0;">ソース</div><div style="position:absolute;left:1402.20px;top:421.10px;font-family:'Liberation Mono', monospace;font-size:27.628px;line-height:1;white-space:pre;color:#000000;transform:scaleX(0.9492);transform-origin:0 0;">,{{"</div><div style="position:absolute;left:1463.79px;top:419.55px;font-family:'Liberation Sans', sans-serif;font-size:27.604px;line-height:1;white-space:pre;color:#a31515;transform:scaleX(1.0115);transform-origin:0 0;">売上日</div><div style="position:absolute;left:1548.57px;top:422.50px;font-family:'Liberation Mono', monospace;font-size:25.700px;line-height:1;white-space:pre;color:#000000;transform:scaleX(1.1429);transform-origin:0 0;">",</div><div style="position:absolute;left:1594.64px;top:424.00px;font-family:'Liberation Mono', monospace;font-size:25.700px;line-height:1;white-space:pre;color:#0000ff;transform:scaleX(1.0310);transform-origin:0 0;">type</div><div style="position:absolute;left:1671.87px;top:421.50px;font-family:'Liberation Mono', monospace;font-size:28.405px;line-height:1;white-space:pre;color:#098b8b;transform:scaleX(0.9158);transform-origin:0 0;">datetime</div><div style="position:absolute;left:1797.16px;top:421.00px;font-family:'Liberation Mono', monospace;font-size:27.842px;line-height:1;white-space:pre;color:#000000;transform:scaleX(0.9192);transform-origin:0 0;">}, {"</div><div style="position:absolute;left:1874.30px;top:418.20px;font-family:'Liberation Sans', sans-serif;font-size:27.200px;line-height:1;white-space:pre;color:#a31515;transform:scaleX(1.0463);transform-origin:0 0;">得意先</div><div style="position:absolute;left:1957.71px;top:422.50px;font-family:'Liberation Mono', monospace;font-size:25.700px;line-height:1;white-space:pre;color:#000000;transform:scaleX(1.0952);transform-origin:0 0;">",</div><div style="position:absolute;left:708.16px;top:488.15px;font-family:'Liberation Sans', sans-serif;font-size:27.756px;line-height:1;white-space:pre;color:#252525;transform:scaleX(1.0385);transform-origin:0 0;">売上日</div><div style="position:absolute;left:1084.50px;top:488.00px;font-family:'Liberation Sans', sans-serif;font-size:27.000px;line-height:1;white-space:pre;color:#252525;transform:scaleX(1.0625);transform-origin:0 0;">得意先</div><div style="position:absolute;left:1459.40px;top:487.10px;font-family:'Liberation Sans', sans-serif;font-size:28.296px;line-height:1;white-space:pre;color:#252525;transform:scaleX(1.0150);transform-origin:0 0;">商品名</div><div style="position:absolute;left:1832.21px;top:485.45px;font-family:'Liberation Sans', sans-serif;font-size:29.700px;line-height:1;white-space:pre;color:#252525;transform:scaleX(0.9879);transform-origin:0 0;">数量</div><div style="position:absolute;left:2165.05px;top:417.75px;font-family:'Liberation Sans', sans-serif;font-size:41.442px;line-height:1;white-space:pre;color:#217346;transform:scaleX(1.1496);transform-origin:0 0;">クエリの設定</div><div style="position:absolute;left:2186.87px;top:517.00px;font-family:'Liberation Sans', sans-serif;font-size:26.000px;line-height:1;white-space:pre;font-weight:bold;color:#1e6b42;transform:scaleX(1.0672);transform-origin:0 0;-webkit-text-stroke:0.45px #1e6b42;">プロパティ</div><div style="position:absolute;left:2189.43px;top:565.90px;font-family:'Liberation Sans', sans-serif;font-size:25.962px;line-height:1;white-space:pre;color:#3a3a3a;transform:scaleX(1.0700);transform-origin:0 0;">名前</div><div style="position:absolute;left:2201.35px;top:618.10px;font-family:'Liberation Sans', sans-serif;font-size:29.160px;line-height:1;white-space:pre;color:#1a1a1a;transform:scaleX(0.9759);transform-origin:0 0;">テーブル</div><div style="position:absolute;left:2316.50px;top:622.25px;font-family:'Liberation Sans', sans-serif;font-size:23.000px;line-height:1;white-space:pre;color:#7a6a60;">1</div><div style="position:absolute;left:2190.67px;top:680.00px;font-family:'Liberation Sans', sans-serif;font-size:24.107px;line-height:1;white-space:pre;color:#3a70b8;transform:scaleX(1.1312);transform-origin:0 0;">すべてのプロパティ</div><div style="position:absolute;left:2190.50px;top:756.50px;font-family:'Liberation Sans', sans-serif;font-size:25.297px;line-height:1;white-space:pre;font-weight:bold;color:#1e6b42;transform:scaleX(1.0888);transform-origin:0 0;-webkit-text-stroke:0.45px #1e6b42;">適用したステップ</div><div style="position:absolute;left:2236.00px;top:810.05px;font-family:'Liberation Sans', sans-serif;font-size:30.471px;line-height:1;white-space:pre;color:#3a3a3a;">ソース</div><div style="position:absolute;left:2237.89px;top:862.15px;font-family:'Liberation Sans', sans-serif;font-size:24.900px;line-height:1;white-space:pre;color:#3a3a3a;transform:scaleX(1.1126);transform-origin:0 0;">変更された型</div><div style="position:absolute;left:14.20px;top:1585.75px;font-family:'Liberation Sans', sans-serif;font-size:24.479px;line-height:1;white-space:pre;color:#ffffff;transform:scaleX(1.0657);transform-origin:0 0;">4 列, 999+ 行</div><div style="position:absolute;left:202.40px;top:1586.25px;font-family:'Liberation Sans', sans-serif;font-size:24.479px;line-height:1;white-space:pre;color:#ffffff;transform:scaleX(1.0411);transform-origin:0 0;">上位 1000 行に基づく列のプロファイリング</div><div style="position:absolute;left:2237.98px;top:1587.00px;font-family:'Liberation Sans', sans-serif;font-size:24.000px;line-height:1;white-space:pre;color:#ffffff;transform:scaleX(1.0236);transform-origin:0 0;">22:55 にダウンロードされたプレビューです</div>
<svg style="position:absolute;left:0;top:0" width="2759" height="1630" viewBox="0 0 2759 1630"><path d="M1921.9 485.9H2202.7A3 3 0 0 1 2205.7 488.9V537.7A3 3 0 0 1 2202.7 540.7H1921.9Z" fill="#52a52e"/><rect x="1927" y="491" width="30" height="45" fill="#fff"/><line x1="2082" y1="539" x2="2166" y2="615.5" stroke="#52a52e" stroke-width="4.6"/><path d="M2178.5 627.5L2154.5 618.5L2169 603.5Z" fill="#52a52e"/><rect x="2181.4" y="595.8" width="259.4" height="64.8" rx="12" fill="none" stroke="#52a52e" stroke-width="5.6"/></svg>
<div style="position:absolute;left:1936.90px;top:500.85px;font-family:'Liberation Sans', sans-serif;font-size:22.594px;line-height:1;white-space:pre;color:#52a52e;">1</div><div style="position:absolute;left:1976.63px;top:500.10px;font-family:'Liberation Sans', sans-serif;font-size:23.209px;line-height:1;white-space:pre;color:#ffffff;transform:scaleX(1.0669);transform-origin:0 0;">売上明細に変更</div>
</div>
<div id="frame"></div>
</body></html>
